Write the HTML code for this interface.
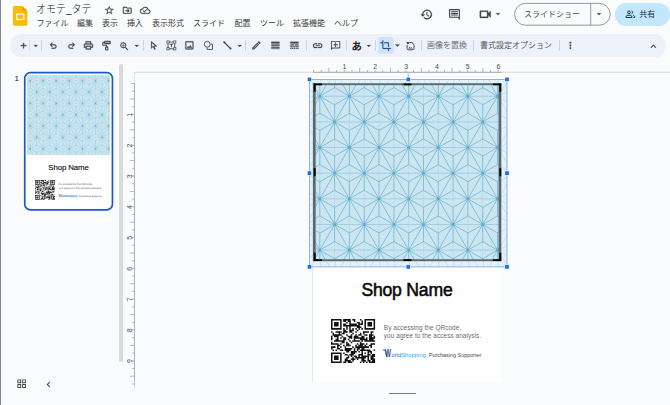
<!DOCTYPE html>
<html lang="ja"><head><meta charset="utf-8"><title>オモテ_タテ - Google スライド</title>
<style>
html,body{margin:0;padding:0}
body{width:670px;height:405px;overflow:hidden;background:#f9fbfd;position:relative;font-family:"Liberation Sans","Noto Sans CJK JP",sans-serif;color:#1f1f1f}
.a{position:absolute}
.t{position:absolute;white-space:nowrap;line-height:1}
.menu{position:absolute;top:18.400px;font-size:8px;line-height:11px;color:#3a3a3a;white-space:nowrap}
.sep{position:absolute;top:40px;width:1px;height:11px;background:#d0d4da}
svg{overflow:visible}
.ic{position:absolute;overflow:visible}
</style></head><body>
<div class="a" style="left:0;top:0;width:1.2px;height:405px;background:#868686"></div><svg class="ic" style="left:12.7px;top:6.3px" width="14.4" height="19.8" viewBox="0 0 14.4 19.8"><path d="M1.4 0h7.9l5.1 5.100v13.300a1.400 1.400 0 0 1-1.400 1.400H1.400A1.400 1.400 0 0 1 0 18.400V1.400A1.400 1.400 0 0 1 1.400 0z" fill="#fbbc04"/><path d="M9.3 0l5.100 5.100H10.400a1.100 1.100 0 0 1-1.100-1.100z" fill="#f29900"/><rect x="3.700" y="8.200" width="7.100" height="5.300" fill="none" stroke="#fff" stroke-width="1.200"/></svg><div class="t" id="title" style="left:36px;top:3.300px;font-size:10px;line-height:14px;color:#222;font-weight:300;transform:scaleY(1.08);transform-origin:0 50%">オモテ_タテ</div><svg class="ic" style="left:104.05px;top:4.75px" width="10.50" height="10.50" viewBox="0 0 24 24"><path d="M22 9.24l-7.19-.62L12 2 9.19 8.63 2 9.24l5.46 4.73L5.82 21 12 17.27 18.18 21l-1.63-7.03L22 9.24zM12 15.4l-3.76 2.27 1-4.28-3.32-2.88 4.38-.38L12 6.1l1.71 4.04 4.38.38-3.32 2.88 1 4.28L12 15.4z" fill="#444746" stroke="#444746" stroke-width="0.50"/></svg><svg class="ic" style="left:122.35px;top:4.95px" width="10.50" height="10.50" viewBox="0 0 24 24"><path d="M20 6h-8l-2-2H4c-1.1 0-2 .9-2 2v12c0 1.1.9 2 2 2h16c1.1 0 2-.9 2-2V8c0-1.1-.9-2-2-2zm0 12H4V6h5.17l2 2H20v10zm-7.84-2.41L13.58 17l4-4-4-4-1.41 1.41L13.75 12H8v2h5.75z" fill="#444746" stroke="#444746" stroke-width="0.50"/></svg><svg class="ic" style="left:140.25px;top:5.15px" width="10.50" height="10.50" viewBox="0 0 24 24"><path d="M19.35 10.04C18.67 6.59 15.64 4 12 4 9.11 4 6.6 5.64 5.35 8.04 2.34 8.36 0 10.91 0 14c0 3.31 2.69 6 6 6h13c2.76 0 5-2.24 5-5 0-2.64-2.05-4.78-4.65-4.96zM19 18H6c-2.21 0-4-1.79-4-4 0-2.05 1.53-3.76 3.56-3.97l1.07-.11.5-.95C8.08 7.14 9.94 6 12 6c2.62 0 4.88 1.86 5.39 4.43l.3 1.5 1.53.11c1.56.1 2.78 1.41 2.78 2.96 0 1.65-1.35 3-3 3zm-9-3.82l-2.09-2.09L6.5 13.5 10 17l6.01-6.01-1.41-1.41z" fill="#444746" stroke="#444746" stroke-width="0.50"/></svg><div class="menu" id="m0" style="left:36.5px">ファイル</div><div class="menu" id="m1" style="left:77.0px">編集</div><div class="menu" id="m2" style="left:102.0px">表示</div><div class="menu" id="m3" style="left:127.0px">挿入</div><div class="menu" id="m4" style="left:152.0px">表示形式</div><div class="menu" id="m5" style="left:193.0px">スライド</div><div class="menu" id="m6" style="left:234.5px">配置</div><div class="menu" id="m7" style="left:260.0px">ツール</div><div class="menu" id="m8" style="left:293.0px">拡張機能</div><div class="menu" id="m9" style="left:334.0px">ヘルプ</div><svg class="ic" style="left:419.80px;top:7.80px" width="13.00" height="13.00" viewBox="0 0 24 24"><path d="M13 3c-4.97 0-9 4.03-9 9H1l3.89 3.89.07.14L9 12H6c0-3.87 3.13-7 7-7s7 3.13 7 7-3.13 7-7 7c-1.93 0-3.68-.79-4.94-2.06l-1.42 1.42C8.27 19.99 10.51 21 13 21c4.97 0 9-4.03 9-9s-4.03-9-9-9zm-1 5v5l4.28 2.54.72-1.21-3.5-2.08V8H12z" fill="#444746" stroke="#444746" stroke-width="0.50"/></svg><svg class="ic" style="left:448.10px;top:8.30px" width="13.00" height="13.00" viewBox="0 0 24 24"><path d="M21.99 4c0-1.1-.89-2-1.99-2H4c-1.1 0-2 .9-2 2v12c0 1.1.9 2 2 2h14l4 4-.01-18zM20 4v13.17L18.83 16H4V4h16zM6 12h12v2H6zm0-3h12v2H6zm0-3h12v2H6z" fill="#444746" stroke="#444746" stroke-width="0.15"/></svg><svg class="ic" style="left:477.55px;top:7.35px" width="14.50" height="14.50" viewBox="0 0 24 24"><path d="M15 8v8H5V8h10m1-2H4c-.55 0-1 .45-1 1v10c0 .55.45 1 1 1h12c.55 0 1-.45 1-1v-3.5l4 4v-11l-4 4V7c0-.55-.45-1-1-1z" fill="#444746" stroke="#444746" stroke-width="0.50"/></svg><svg class="ic" style="left:493.30px;top:9.30px" width="10.00" height="10.00" viewBox="0 0 24 24"><path d="M7 10l5 5 5-5z" fill="#444746" stroke="#444746" stroke-width="0.50"/></svg><svg class="ic" style="left:0;top:0" width="670" height="30" viewBox="0 0 670 30"><rect x="514.600" y="3.400" width="95.600" height="21.800" rx="10.900" fill="none" stroke="#7f8285" stroke-width="0.800"/><path d="M590.700 3.400V25.200" stroke="#7f8285" stroke-width="0.800"/></svg><div class="t" id="ss" style="left:524px;top:8.700px;font-size:8px;line-height:11px;color:#4d5156">スライドショー</div><svg class="ic" style="left:594.30px;top:9.30px" width="10.00" height="10.00" viewBox="0 0 24 24"><path d="M7 10l5 5 5-5z" fill="#444746" stroke="#444746" stroke-width="0.50"/></svg><div class="a" style="left:615px;top:3px;width:54.500px;height:22.500px;background:#c2e7ff;border-radius:11.500px"></div><svg class="ic" style="left:624.50px;top:8.70px" width="10.60" height="10.60" viewBox="0 0 24 24"><g fill="none" stroke="#0e2a44" stroke-width="2.200"><circle cx="9" cy="7.600" r="3.100"/><path d="M2.200 19.200v-1.600c0-2.400 4.400-3.800 6.800-3.800s6.800 1.400 6.800 3.800v1.600z" stroke-linejoin="round"/><path d="M15 4.600a3.100 3.100 0 0 1 0 6"/><path d="M18 14.200c2.100.600 4 1.700 4 3.400v1.600h-3"/></g></svg><div class="t" id="share" style="left:639.300px;top:8.700px;font-size:8px;line-height:11px;color:#1a2f44;font-weight:400">共有</div><div class="a" style="left:9.500px;top:34px;width:656px;height:23px;background:#edf2fa;border-radius:11.500px"></div><svg class="ic" style="left:18.70px;top:40.90px" width="9.20" height="9.20" viewBox="0 0 24 24"><path d="M19 13h-6v6h-2v-6H5v-2h6V5h2v6h6v2z" fill="#444746" stroke="#444746" stroke-width="1.20"/></svg><div class="sep" style="left:29.300px;background:#cfe3f3"></div><svg class="ic" style="left:31.25px;top:40.75px" width="9.50" height="9.50" viewBox="0 0 24 24"><path d="M7 10l5 5 5-5z" fill="#444746" stroke="#444746" stroke-width="0.50"/></svg><div class="sep" style="left:40.900px"></div><svg class="ic" style="left:47.90px;top:40.40px" width="10.80" height="10.80" viewBox="0 0 24 24"><path d="M7.8 9.5H14a5 5 0 0 1 0 10H8v-2h6a3 3 0 0 0 0-6H7.8l2.6 2.6L9 15.5 4 10.5l5-5 1.4 1.4z" fill="#444746" stroke="#444746" stroke-width="0.50"/></svg><svg class="ic" style="left:65.80px;top:40.40px" width="10.80" height="10.80" viewBox="0 0 24 24"><path d="M7.8 9.5H14a5 5 0 0 1 0 10H8v-2h6a3 3 0 0 0 0-6H7.8l2.6 2.6L9 15.5 4 10.5l5-5 1.4 1.4z" fill="#444746" stroke="#444746" stroke-width="0.50" transform="translate(24 0) scale(-1 1)"/></svg><svg class="ic" style="left:83.30px;top:40.10px" width="10.80" height="10.80" viewBox="0 0 24 24"><path d="M19 8h-1V3H6v5H5c-1.66 0-3 1.34-3 3v6h4v4h12v-4h4v-6c0-1.66-1.34-3-3-3zM8 5h8v3H8V5zm8 12v2H8v-4h8v2zm2-2v-2H6v2H4v-4c0-.55.45-1 1-1h14c.55 0 1 .45 1 1v4h-2z" fill="#444746" stroke="#444746" stroke-width="0.50"/></svg><svg class="ic" style="left:101.00px;top:40.30px" width="10.80" height="10.80" viewBox="0 0 24 24"><g fill="none" stroke="#444746" stroke-width="2.400" stroke-linejoin="round"><rect x="8" y="2.600" width="12.500" height="5.400" rx="1.600" fill="#9fa2a3"/><path d="M8 5.300H5.200a1.200 1.200 0 0 0-1.200 1.200v4a1.200 1.200 0 0 0 1.200 1.200h6.300a1.200 1.200 0 0 1 1.200 1.200v2.600"/><rect x="10.200" y="15.800" width="5" height="6.600" rx="1.200"/></g></svg><svg class="ic" style="left:119.40px;top:40.60px" width="10.80" height="10.80" viewBox="0 0 24 24"><path d="M15.5 14h-.79l-.28-.27C15.41 12.59 16 11.11 16 9.5 16 5.91 13.09 3 9.5 3S3 5.91 3 9.5 5.91 16 9.5 16c1.61 0 3.09-.59 4.23-1.57l.27.28v.79l5 4.99L20.49 19l-4.99-5zm-6 0C7.01 14 5 11.99 5 9.5S7.01 5 9.5 5 14 7.01 14 9.5 11.99 14 9.5 14zm.5-7H9v2H7v1h2v2h1v-2h2V9h-2z" fill="#444746" stroke="#444746" stroke-width="0.30"/></svg><svg class="ic" style="left:131.55px;top:40.75px" width="9.50" height="9.50" viewBox="0 0 24 24"><path d="M7 10l5 5 5-5z" fill="#444746" stroke="#444746" stroke-width="0.50"/></svg><div class="sep" style="left:142.500px"></div><svg class="ic" style="left:147.60px;top:40.10px" width="10.80" height="10.80" viewBox="0 0 24 24"><path d="M7 2.5v17l4.6-4.4 2.9 6.6 2.4-1-2.9-6.5 6.2-.4L7 2.5zm1.8 4.2l6.900 6.100-3.600.300-.500 1.100.600 1.400 1.700 3.800-.100.000-2.600-5.800-2.400 2.300V6.700z" fill="#444746" stroke="#444746" stroke-width="0.50"/></svg><svg class="ic" style="left:165.60px;top:40.10px" width="10.80" height="10.80" viewBox="0 0 24 24"><g fill="none" stroke="#444746" stroke-width="2"><rect x="4.500" y="4.500" width="15" height="15"/></g><g fill="#edf2fa" stroke="#444746" stroke-width="1.600"><rect x="2" y="2" width="5" height="5"/><rect x="17" y="2" width="5" height="5"/><rect x="2" y="17" width="5" height="5"/><rect x="17" y="17" width="5" height="5"/></g><path d="M8.500 8.500h7v2h-2.500v5.500h-2V10.500H8.500z" fill="#444746"/></svg><svg class="ic" style="left:184.10px;top:40.10px" width="10.80" height="10.80" viewBox="0 0 24 24"><path d="M19 5v14H5V5h14m0-2H5c-1.1 0-2 .9-2 2v14c0 1.1.9 2 2 2h14c1.1 0 2-.9 2-2V5c0-1.1-.9-2-2-2zm-4.86 8.86l-3 3.87L9 13.14 6 17h12l-3.86-5.14z" fill="#444746" stroke="#444746" stroke-width="0.50"/></svg><svg class="ic" style="left:202.60px;top:40.10px" width="10.80" height="10.80" viewBox="0 0 24 24"><g fill="none" stroke="#444746" stroke-width="2"><circle cx="9.500" cy="9.500" r="6.500"/><path d="M16.800 9.200H21v11.800H9.200v-4.200"/></g></svg><svg class="ic" style="left:221.60px;top:40.10px" width="10.80" height="10.80" viewBox="0 0 24 24"><path d="M5.500 5.500L18.500 18.500" stroke="#444746" stroke-width="2.800"/><circle cx="5" cy="5" r="2.400" fill="#444746"/><circle cx="19" cy="19" r="2.200" fill="#444746"/></svg><svg class="ic" style="left:234.55px;top:40.75px" width="9.50" height="9.50" viewBox="0 0 24 24"><path d="M7 10l5 5 5-5z" fill="#444746" stroke="#444746" stroke-width="0.50"/></svg><div class="sep" style="left:244.500px"></div><svg class="ic" style="left:250.60px;top:40.10px" width="10.80" height="10.80" viewBox="0 0 24 24"><path d="M3 17.25V21h3.750L17.810 9.940l-3.750-3.750L3 17.250zM5.920 19H5v-.920l9.060-9.060.920.920L5.920 19zM20.710 5.630l-2.340-2.340a1 1 0 0 0-1.410 0l-1.830 1.830 3.750 3.750 1.830-1.830a1 1 0 0 0 0-1.410z" fill="#444746" stroke="#444746" stroke-width="0.50"/></svg><svg class="ic" style="left:270.10px;top:40.10px" width="10.80" height="10.80" viewBox="0 0 24 24"><path d="M3 17h18v-2H3v2zm0 3h18v-1H3v1zm0-7h18v-3H3v3zm0-9v4h18V4H3z" fill="#444746" stroke="#444746" stroke-width="0.50"/></svg><svg class="ic" style="left:288.60px;top:40.10px" width="10.80" height="10.80" viewBox="0 0 24 24"><path d="M3 16h5v-2H3v2zm6.500 0h5v-2h-5v2zm6.500 0h5v-2h-5v2zM3 20h2v-2H3v2zm4 0h2v-2H7v2zm4 0h2v-2h-2v2zm4 0h2v-2h-2v2zm4 0h2v-2h-2v2zM3 12h8v-2H3v2zm10 0h8v-2h-8v2zM3 4v4h18V4H3z" fill="#444746" stroke="#444746" stroke-width="0.50"/></svg><div class="sep" style="left:306px"></div><svg class="ic" style="left:311.85px;top:39.85px" width="11.30" height="11.30" viewBox="0 0 24 24"><path d="M3.9 12c0-1.71 1.39-3.1 3.1-3.1h4V7H7c-2.76 0-5 2.24-5 5s2.24 5 5 5h4v-1.9H7c-1.71 0-3.1-1.39-3.1-3.1zM8 13h8v-2H8v2zm9-6h-4v1.9h4c1.71 0 3.1 1.39 3.1 3.1s-1.39 3.1-3.1 3.1h-4V17h4c2.76 0 5-2.24 5-5s-2.24-5-5-5z" fill="#444746" stroke="#444746" stroke-width="0.50"/></svg><svg class="ic" style="left:329.70px;top:40.10px" width="11.20" height="11.20" viewBox="0 0 24 24"><path d="M22 4c0-1.1-.9-2-2-2H4c-1.1 0-2 .9-2 2v12c0 1.1.9 2 2 2h14l4 4V4zm-2 13.17L18.83 16H4V4h16v13.17zM13 5h-2v4H7v2h4v4h2v-4h4V9h-4z" fill="#444746" stroke="#444746" stroke-width="0.00" transform="translate(24 0) scale(-1 1)"/></svg><div class="sep" style="left:346px"></div><div class="t" id="aa" style="left:351.500px;top:39.500px;font-size:10.500px;line-height:12px;color:#1f1f1f;font-weight:700">あ</div><svg class="ic" style="left:363.75px;top:40.75px" width="9.50" height="9.50" viewBox="0 0 24 24"><path d="M7 10l5 5 5-5z" fill="#444746" stroke="#444746" stroke-width="0.50"/></svg><div class="sep" style="left:374.500px"></div><div class="a" style="left:377.500px;top:37px;width:16.500px;height:17px;background:#d3e3fd;border-radius:2.500px"></div><svg class="ic" style="left:380.15px;top:40.05px" width="11.30" height="11.30" viewBox="0 0 24 24"><path d="M17 15h2V7c0-1.1-.9-2-2-2H9v2h8v8zM7 17V1H5v4H1v2h4v10c0 1.1.9 2 2 2h10v4h2v-4h4v-2H7z" fill="#2d5597" stroke="#2d5597" stroke-width="0.50"/></svg><svg class="ic" style="left:392.00px;top:39.90px" width="10.80" height="10.80" viewBox="0 0 24 24"><path d="M7 10l5 5 5-5z" fill="#444746" stroke="#444746" stroke-width="0.50"/></svg><svg class="ic" style="left:404.60px;top:39.70px" width="11.20" height="11.20" viewBox="0 0 24 24"><path d="M4.500 11v7.500c0 1.400 1.100 2.500 2.500 2.500h10c1.400 0 2.500-1.100 2.500-2.500V11" fill="none" stroke="#444746" stroke-width="2.100"/><path d="M6.200 8.500A7.200 7.200 0 0 1 19.300 10.500" fill="none" stroke="#444746" stroke-width="2.100"/><path d="M3.200 3.500l6.300 1.200-5 4.800z" fill="#444746"/><path d="M7 18.500l3.200-4 2.300 2.800 1.700-2 2.800 3.200z" fill="#444746"/></svg><div class="sep" style="left:421px"></div><div class="t" id="rep" style="left:427px;top:40px;font-size:8px;line-height:11px;color:#6b7075">画像を置換</div><div class="sep" style="left:472.500px"></div><div class="t" id="fmt" style="left:480px;top:40px;font-size:8px;line-height:11px;color:#50555a">書式設定オプション</div><div class="sep" style="left:558.500px"></div><svg class="ic" style="left:565.10px;top:40.10px" width="10.80" height="10.80" viewBox="0 0 24 24"><path d="M12 8c1.1 0 2-.9 2-2s-.9-2-2-2-2 .9-2 2 .9 2 2 2zm0 2c-1.1 0-2 .9-2 2s.9 2 2 2 2-.9 2-2-.9-2-2-2zm0 6c-1.1 0-2 .9-2 2s.9 2 2 2 2-.9 2-2-.9-2-2-2z" fill="#444746" stroke="#444746" stroke-width="0.50"/></svg><svg class="ic" style="left:648.10px;top:40.60px" width="10.80" height="10.80" viewBox="0 0 24 24"><path d="M12 8l-6 6 1.41 1.41L12 10.830l4.59 4.58L18 14z" fill="#444746" stroke="#444746" stroke-width="0.50"/></svg><div class="t" id="n1" style="left:14.500px;top:74.200px;font-size:8px;line-height:10px;color:#222;font-weight:400">1</div><div class="a" style="left:118.700px;top:64px;width:4.200px;height:297.500px;background:#d9dbdf;border-radius:2.100px"></div><svg class="ic" style="left:0;top:0" width="140" height="220" viewBox="0 0 140 220"><rect x="24.750" y="72.650" width="87.700" height="137.200" rx="5.700" fill="#fff" stroke="#1c58cb" stroke-width="1.700"/></svg><svg class="ic" style="left:26.90px;top:75.30px;overflow:hidden;border-radius:2.500px 2.500px 0 0" width="82.90" height="79.50" viewBox="313.200 83.200 187.500 180"><rect x="310" y="80" width="198" height="190" fill="#cce6f1"/><path d="M260.9 44.9L290.5 44.9M275.7 36.3L275.7 53.4M290.5 44.9L320.1 44.9M305.3 36.3L305.3 53.4M320.1 44.9L349.7 44.9M334.9 36.3L334.9 53.4M349.7 44.9L379.3 44.9M364.5 36.3L364.5 53.4M379.3 44.9L409.0 44.9M394.2 36.3L394.2 53.4M409.0 44.9L438.6 44.9M423.8 36.3L423.8 53.4M438.6 44.9L468.2 44.9M453.4 36.3L453.4 53.4M468.2 44.9L497.8 44.9M483.0 36.3L483.0 53.4M497.8 44.9L527.4 44.9M512.6 36.3L512.6 53.4M527.4 44.9L557.1 44.9M542.2 36.3L542.2 53.4M557.1 44.9L586.7 44.9M571.9 36.3L571.9 53.4M275.7 70.5L305.3 70.5M290.5 62.0L290.5 79.1M305.3 70.5L334.9 70.5M320.1 62.0L320.1 79.1M334.9 70.5L364.5 70.5M349.7 62.0L349.7 79.1M364.5 70.5L394.2 70.5M379.3 62.0L379.3 79.1M394.2 70.5L423.8 70.5M409.0 62.0L409.0 79.1M423.8 70.5L453.4 70.5M438.6 62.0L438.6 79.1M453.4 70.5L483.0 70.5M468.2 62.0L468.2 79.1M483.0 70.5L512.6 70.5M497.8 62.0L497.8 79.1M512.6 70.5L542.2 70.5M527.4 62.0L527.4 79.1M542.2 70.5L571.9 70.5M557.1 62.0L557.1 79.1M571.9 70.5L601.5 70.5M586.7 62.0L586.7 79.1M260.9 96.2L290.5 96.2M275.7 87.6L275.7 104.8M290.5 96.2L320.1 96.2M305.3 87.6L305.3 104.8M320.1 96.2L349.7 96.2M334.9 87.6L334.9 104.8M349.7 96.2L379.3 96.2M364.5 87.6L364.5 104.8M379.3 96.2L409.0 96.2M394.2 87.6L394.2 104.8M409.0 96.2L438.6 96.2M423.8 87.6L423.8 104.8M438.6 96.2L468.2 96.2M453.4 87.6L453.4 104.8M468.2 96.2L497.8 96.2M483.0 87.6L483.0 104.8M497.8 96.2L527.4 96.2M512.6 87.6L512.6 104.8M527.4 96.2L557.1 96.2M542.2 87.6L542.2 104.8M557.1 96.2L586.7 96.2M571.9 87.6L571.9 104.8M275.7 121.9L305.3 121.9M290.5 113.3L290.5 130.4M305.3 121.9L334.9 121.9M320.1 113.3L320.1 130.4M334.9 121.9L364.5 121.9M349.7 113.3L349.7 130.4M364.5 121.9L394.2 121.9M379.3 113.3L379.3 130.4M394.2 121.9L423.8 121.9M409.0 113.3L409.0 130.4M423.8 121.9L453.4 121.9M438.6 113.3L438.6 130.4M453.4 121.9L483.0 121.9M468.2 113.3L468.2 130.4M483.0 121.9L512.6 121.9M497.8 113.3L497.8 130.4M512.6 121.9L542.2 121.9M527.4 113.3L527.4 130.4M542.2 121.9L571.9 121.9M557.1 113.3L557.1 130.4M571.9 121.9L601.5 121.9M586.7 113.3L586.7 130.4M260.9 147.5L290.5 147.5M275.7 139.0L275.7 156.1M290.5 147.5L320.1 147.5M305.3 139.0L305.3 156.1M320.1 147.5L349.7 147.5M334.9 139.0L334.9 156.1M349.7 147.5L379.3 147.5M364.5 139.0L364.5 156.1M379.3 147.5L409.0 147.5M394.2 139.0L394.2 156.1M409.0 147.5L438.6 147.5M423.8 139.0L423.8 156.1M438.6 147.5L468.2 147.5M453.4 139.0L453.4 156.1M468.2 147.5L497.8 147.5M483.0 139.0L483.0 156.1M497.8 147.5L527.4 147.5M512.6 139.0L512.6 156.1M527.4 147.5L557.1 147.5M542.2 139.0L542.2 156.1M557.1 147.5L586.7 147.5M571.9 139.0L571.9 156.1M275.7 173.2L305.3 173.2M290.5 164.6L290.5 181.7M305.3 173.2L334.9 173.2M320.1 164.6L320.1 181.7M334.9 173.2L364.5 173.2M349.7 164.6L349.7 181.7M364.5 173.2L394.2 173.2M379.3 164.6L379.3 181.7M394.2 173.2L423.8 173.2M409.0 164.6L409.0 181.7M423.8 173.2L453.4 173.2M438.6 164.6L438.6 181.7M453.4 173.2L483.0 173.2M468.2 164.6L468.2 181.7M483.0 173.2L512.6 173.2M497.8 164.6L497.8 181.7M512.6 173.2L542.2 173.2M527.4 164.6L527.4 181.7M542.2 173.2L571.9 173.2M557.1 164.6L557.1 181.7M571.9 173.2L601.5 173.2M586.7 164.6L586.7 181.7M260.9 198.8L290.5 198.8M275.7 190.3L275.7 207.4M290.5 198.8L320.1 198.8M305.3 190.3L305.3 207.4M320.1 198.8L349.7 198.8M334.9 190.3L334.9 207.4M349.7 198.8L379.3 198.8M364.5 190.3L364.5 207.4M379.3 198.8L409.0 198.8M394.2 190.3L394.2 207.4M409.0 198.8L438.6 198.8M423.8 190.3L423.8 207.4M438.6 198.8L468.2 198.8M453.4 190.3L453.4 207.4M468.2 198.8L497.8 198.8M483.0 190.3L483.0 207.4M497.8 198.8L527.4 198.8M512.6 190.3L512.6 207.4M527.4 198.8L557.1 198.8M542.2 190.3L542.2 207.4M557.1 198.8L586.7 198.8M571.9 190.3L571.9 207.4M275.7 224.5L305.3 224.5M290.5 215.9L290.5 233.0M305.3 224.5L334.9 224.5M320.1 215.9L320.1 233.0M334.9 224.5L364.5 224.5M349.7 215.9L349.7 233.0M364.5 224.5L394.2 224.5M379.3 215.9L379.3 233.0M394.2 224.5L423.8 224.5M409.0 215.9L409.0 233.0M423.8 224.5L453.4 224.5M438.6 215.9L438.6 233.0M453.4 224.5L483.0 224.5M468.2 215.9L468.2 233.0M483.0 224.5L512.6 224.5M497.8 215.9L497.8 233.0M512.6 224.5L542.2 224.5M527.4 215.9L527.4 233.0M542.2 224.5L571.9 224.5M557.1 215.9L557.1 233.0M571.9 224.5L601.5 224.5M586.7 215.9L586.7 233.0M260.9 250.1L290.5 250.1M275.7 241.6L275.7 258.7M290.5 250.1L320.1 250.1M305.3 241.6L305.3 258.7M320.1 250.1L349.7 250.1M334.9 241.6L334.9 258.7M349.7 250.1L379.3 250.1M364.5 241.6L364.5 258.7M379.3 250.1L409.0 250.1M394.2 241.6L394.2 258.7M409.0 250.1L438.6 250.1M423.8 241.6L423.8 258.7M438.6 250.1L468.2 250.1M453.4 241.6L453.4 258.7M468.2 250.1L497.8 250.1M483.0 241.6L483.0 258.7M497.8 250.1L527.4 250.1M512.6 241.6L512.6 258.7M527.4 250.1L557.1 250.1M542.2 241.6L542.2 258.7M557.1 250.1L586.7 250.1M571.9 241.6L571.9 258.7M275.7 275.8L305.3 275.8M290.5 267.2L290.5 284.3M305.3 275.8L334.9 275.8M320.1 267.2L320.1 284.3M334.9 275.8L364.5 275.8M349.7 267.2L349.7 284.3M364.5 275.8L394.2 275.8M379.3 267.2L379.3 284.3M394.2 275.8L423.8 275.8M409.0 267.2L409.0 284.3M423.8 275.8L453.4 275.8M438.6 267.2L438.6 284.3M453.4 275.8L483.0 275.8M468.2 267.2L468.2 284.3M483.0 275.8L512.6 275.8M497.8 267.2L497.8 284.3M512.6 275.8L542.2 275.8M527.4 267.2L527.4 284.3M542.2 275.8L571.9 275.8M557.1 267.2L557.1 284.3M571.9 275.8L601.5 275.8M586.7 267.2L586.7 284.3M260.9 301.4L290.5 301.4M275.7 292.9L275.7 310.0M290.5 301.4L320.1 301.4M305.3 292.9L305.3 310.0M320.1 301.4L349.7 301.4M334.9 292.9L334.9 310.0M349.7 301.4L379.3 301.4M364.5 292.9L364.5 310.0M379.3 301.4L409.0 301.4M394.2 292.9L394.2 310.0M409.0 301.4L438.6 301.4M423.8 292.9L423.8 310.0M438.6 301.4L468.2 301.4M453.4 292.9L453.4 310.0M468.2 301.4L497.8 301.4M483.0 292.9L483.0 310.0M497.8 301.4L527.4 301.4M512.6 292.9L512.6 310.0M527.4 301.4L557.1 301.4M542.2 292.9L542.2 310.0M557.1 301.4L586.7 301.4M571.9 292.9L571.9 310.0" stroke="#abd3e5" stroke-width="0.800" fill="none"/><path d="M260.9 44.9L275.7 70.5M260.9 44.9L246.1 70.5M260.9 44.9L275.7 53.4M260.9 44.9L260.9 62.0M260.9 44.9L246.1 53.4M260.9 44.9L246.1 36.3M260.9 44.9L260.9 27.8M260.9 44.9L275.7 36.3M290.5 44.9L305.3 70.5M290.5 44.9L275.7 70.5M290.5 44.9L305.3 53.4M290.5 44.9L290.5 62.0M290.5 44.9L275.7 53.4M290.5 44.9L275.7 36.3M290.5 44.9L290.5 27.8M290.5 44.9L305.3 36.3M320.1 44.9L334.9 70.5M320.1 44.9L305.3 70.5M320.1 44.9L334.9 53.4M320.1 44.9L320.1 62.0M320.1 44.9L305.3 53.4M320.1 44.9L305.3 36.3M320.1 44.9L320.1 27.8M320.1 44.9L334.9 36.3M349.7 44.9L364.5 70.5M349.7 44.9L334.9 70.5M349.7 44.9L364.5 53.4M349.7 44.9L349.7 62.0M349.7 44.9L334.9 53.4M349.7 44.9L334.9 36.3M349.7 44.9L349.7 27.8M349.7 44.9L364.5 36.3M379.3 44.9L394.2 70.5M379.3 44.9L364.5 70.5M379.3 44.9L394.2 53.4M379.3 44.9L379.3 62.0M379.3 44.9L364.5 53.4M379.3 44.9L364.5 36.3M379.3 44.9L379.3 27.8M379.3 44.9L394.2 36.3M409.0 44.9L423.8 70.5M409.0 44.9L394.2 70.5M409.0 44.9L423.8 53.4M409.0 44.9L409.0 62.0M409.0 44.9L394.2 53.4M409.0 44.9L394.2 36.3M409.0 44.9L409.0 27.8M409.0 44.9L423.8 36.3M438.6 44.9L453.4 70.5M438.6 44.9L423.8 70.5M438.6 44.9L453.4 53.4M438.6 44.9L438.6 62.0M438.6 44.9L423.8 53.4M438.6 44.9L423.8 36.3M438.6 44.9L438.6 27.8M438.6 44.9L453.4 36.3M468.2 44.9L483.0 70.5M468.2 44.9L453.4 70.5M468.2 44.9L483.0 53.4M468.2 44.9L468.2 62.0M468.2 44.9L453.4 53.4M468.2 44.9L453.4 36.3M468.2 44.9L468.2 27.8M468.2 44.9L483.0 36.3M497.8 44.9L512.6 70.5M497.8 44.9L483.0 70.5M497.8 44.9L512.6 53.4M497.8 44.9L497.8 62.0M497.8 44.9L483.0 53.4M497.8 44.9L483.0 36.3M497.8 44.9L497.8 27.8M497.8 44.9L512.6 36.3M527.4 44.9L542.2 70.5M527.4 44.9L512.6 70.5M527.4 44.9L542.2 53.4M527.4 44.9L527.4 62.0M527.4 44.9L512.6 53.4M527.4 44.9L512.6 36.3M527.4 44.9L527.4 27.8M527.4 44.9L542.2 36.3M557.1 44.9L571.9 70.5M557.1 44.9L542.3 70.5M557.1 44.9L571.9 53.4M557.1 44.9L557.1 62.0M557.1 44.9L542.3 53.4M557.1 44.9L542.3 36.3M557.1 44.9L557.1 27.8M557.1 44.9L571.9 36.3M275.7 70.5L290.5 96.2M275.7 70.5L260.9 96.2M275.7 70.5L290.5 79.1M275.7 70.5L275.7 87.6M275.7 70.5L260.9 79.1M275.7 70.5L260.9 62.0M275.7 70.5L275.7 53.4M275.7 70.5L290.5 62.0M305.3 70.5L320.1 96.2M305.3 70.5L290.5 96.2M305.3 70.5L320.1 79.1M305.3 70.5L305.3 87.6M305.3 70.5L290.5 79.1M305.3 70.5L290.5 62.0M305.3 70.5L305.3 53.4M305.3 70.5L320.1 62.0M334.9 70.5L349.7 96.2M334.9 70.5L320.1 96.2M334.9 70.5L349.7 79.1M334.9 70.5L334.9 87.6M334.9 70.5L320.1 79.1M334.9 70.5L320.1 62.0M334.9 70.5L334.9 53.4M334.9 70.5L349.7 62.0M364.5 70.5L379.3 96.2M364.5 70.5L349.7 96.2M364.5 70.5L379.3 79.1M364.5 70.5L364.5 87.6M364.5 70.5L349.7 79.1M364.5 70.5L349.7 62.0M364.5 70.5L364.5 53.4M364.5 70.5L379.3 62.0M394.2 70.5L409.0 96.2M394.2 70.5L379.3 96.2M394.2 70.5L409.0 79.1M394.2 70.5L394.2 87.6M394.2 70.5L379.3 79.1M394.2 70.5L379.3 62.0M394.2 70.5L394.2 53.4M394.2 70.5L409.0 62.0M423.8 70.5L438.6 96.2M423.8 70.5L409.0 96.2M423.8 70.5L438.6 79.1M423.8 70.5L423.8 87.6M423.8 70.5L409.0 79.1M423.8 70.5L409.0 62.0M423.8 70.5L423.8 53.4M423.8 70.5L438.6 62.0M453.4 70.5L468.2 96.2M453.4 70.5L438.6 96.2M453.4 70.5L468.2 79.1M453.4 70.5L453.4 87.6M453.4 70.5L438.6 79.1M453.4 70.5L438.6 62.0M453.4 70.5L453.4 53.4M453.4 70.5L468.2 62.0M483.0 70.5L497.8 96.2M483.0 70.5L468.2 96.2M483.0 70.5L497.8 79.1M483.0 70.5L483.0 87.6M483.0 70.5L468.2 79.1M483.0 70.5L468.2 62.0M483.0 70.5L483.0 53.4M483.0 70.5L497.8 62.0M512.6 70.5L527.4 96.2M512.6 70.5L497.8 96.2M512.6 70.5L527.4 79.1M512.6 70.5L512.6 87.6M512.6 70.5L497.8 79.1M512.6 70.5L497.8 62.0M512.6 70.5L512.6 53.4M512.6 70.5L527.4 62.0M542.2 70.5L557.1 96.2M542.2 70.5L527.4 96.2M542.2 70.5L557.1 79.1M542.2 70.5L542.2 87.6M542.2 70.5L527.4 79.1M542.2 70.5L527.4 62.0M542.2 70.5L542.2 53.4M542.2 70.5L557.1 62.0M571.9 70.5L586.7 96.2M571.9 70.5L557.1 96.2M571.9 70.5L586.7 79.1M571.9 70.5L571.9 87.6M571.9 70.5L557.1 79.1M571.9 70.5L557.1 62.0M571.9 70.5L571.9 53.4M571.9 70.5L586.7 62.0M260.9 96.2L275.7 121.9M260.9 96.2L246.1 121.9M260.9 96.2L275.7 104.8M260.9 96.2L260.9 113.3M260.9 96.2L246.1 104.8M260.9 96.2L246.1 87.6M260.9 96.2L260.9 79.1M260.9 96.2L275.7 87.6M290.5 96.2L305.3 121.9M290.5 96.2L275.7 121.9M290.5 96.2L305.3 104.8M290.5 96.2L290.5 113.3M290.5 96.2L275.7 104.8M290.5 96.2L275.7 87.6M290.5 96.2L290.5 79.1M290.5 96.2L305.3 87.6M320.1 96.2L334.9 121.9M320.1 96.2L305.3 121.9M320.1 96.2L334.9 104.8M320.1 96.2L320.1 113.3M320.1 96.2L305.3 104.8M320.1 96.2L305.3 87.6M320.1 96.2L320.1 79.1M320.1 96.2L334.9 87.6M349.7 96.2L364.5 121.9M349.7 96.2L334.9 121.9M349.7 96.2L364.5 104.8M349.7 96.2L349.7 113.3M349.7 96.2L334.9 104.8M349.7 96.2L334.9 87.6M349.7 96.2L349.7 79.1M349.7 96.2L364.5 87.6M379.3 96.2L394.2 121.9M379.3 96.2L364.5 121.9M379.3 96.2L394.2 104.8M379.3 96.2L379.3 113.3M379.3 96.2L364.5 104.8M379.3 96.2L364.5 87.6M379.3 96.2L379.3 79.1M379.3 96.2L394.2 87.6M409.0 96.2L423.8 121.9M409.0 96.2L394.2 121.9M409.0 96.2L423.8 104.8M409.0 96.2L409.0 113.3M409.0 96.2L394.2 104.8M409.0 96.2L394.2 87.6M409.0 96.2L409.0 79.1M409.0 96.2L423.8 87.6M438.6 96.2L453.4 121.9M438.6 96.2L423.8 121.9M438.6 96.2L453.4 104.8M438.6 96.2L438.6 113.3M438.6 96.2L423.8 104.8M438.6 96.2L423.8 87.6M438.6 96.2L438.6 79.1M438.6 96.2L453.4 87.6M468.2 96.2L483.0 121.9M468.2 96.2L453.4 121.9M468.2 96.2L483.0 104.8M468.2 96.2L468.2 113.3M468.2 96.2L453.4 104.8M468.2 96.2L453.4 87.6M468.2 96.2L468.2 79.1M468.2 96.2L483.0 87.6M497.8 96.2L512.6 121.9M497.8 96.2L483.0 121.9M497.8 96.2L512.6 104.8M497.8 96.2L497.8 113.3M497.8 96.2L483.0 104.8M497.8 96.2L483.0 87.6M497.8 96.2L497.8 79.1M497.8 96.2L512.6 87.6M527.4 96.2L542.2 121.9M527.4 96.2L512.6 121.9M527.4 96.2L542.2 104.8M527.4 96.2L527.4 113.3M527.4 96.2L512.6 104.8M527.4 96.2L512.6 87.6M527.4 96.2L527.4 79.1M527.4 96.2L542.2 87.6M557.1 96.2L571.9 121.9M557.1 96.2L542.3 121.9M557.1 96.2L571.9 104.8M557.1 96.2L557.1 113.3M557.1 96.2L542.3 104.8M557.1 96.2L542.3 87.6M557.1 96.2L557.1 79.1M557.1 96.2L571.9 87.6M275.7 121.9L290.5 147.5M275.7 121.9L260.9 147.5M275.7 121.9L290.5 130.4M275.7 121.9L275.7 139.0M275.7 121.9L260.9 130.4M275.7 121.9L260.9 113.3M275.7 121.9L275.7 104.8M275.7 121.9L290.5 113.3M305.3 121.9L320.1 147.5M305.3 121.9L290.5 147.5M305.3 121.9L320.1 130.4M305.3 121.9L305.3 139.0M305.3 121.9L290.5 130.4M305.3 121.9L290.5 113.3M305.3 121.9L305.3 104.8M305.3 121.9L320.1 113.3M334.9 121.9L349.7 147.5M334.9 121.9L320.1 147.5M334.9 121.9L349.7 130.4M334.9 121.9L334.9 139.0M334.9 121.9L320.1 130.4M334.9 121.9L320.1 113.3M334.9 121.9L334.9 104.8M334.9 121.9L349.7 113.3M364.5 121.9L379.3 147.5M364.5 121.9L349.7 147.5M364.5 121.9L379.3 130.4M364.5 121.9L364.5 139.0M364.5 121.9L349.7 130.4M364.5 121.9L349.7 113.3M364.5 121.9L364.5 104.8M364.5 121.9L379.3 113.3M394.2 121.9L409.0 147.5M394.2 121.9L379.3 147.5M394.2 121.9L409.0 130.4M394.2 121.9L394.2 139.0M394.2 121.9L379.3 130.4M394.2 121.9L379.3 113.3M394.2 121.9L394.2 104.8M394.2 121.9L409.0 113.3M423.8 121.9L438.6 147.5M423.8 121.9L409.0 147.5M423.8 121.9L438.6 130.4M423.8 121.9L423.8 139.0M423.8 121.9L409.0 130.4M423.8 121.9L409.0 113.3M423.8 121.9L423.8 104.8M423.8 121.9L438.6 113.3M453.4 121.9L468.2 147.5M453.4 121.9L438.6 147.5M453.4 121.9L468.2 130.4M453.4 121.9L453.4 139.0M453.4 121.9L438.6 130.4M453.4 121.9L438.6 113.3M453.4 121.9L453.4 104.8M453.4 121.9L468.2 113.3M483.0 121.9L497.8 147.5M483.0 121.9L468.2 147.5M483.0 121.9L497.8 130.4M483.0 121.9L483.0 139.0M483.0 121.9L468.2 130.4M483.0 121.9L468.2 113.3M483.0 121.9L483.0 104.8M483.0 121.9L497.8 113.3M512.6 121.9L527.4 147.5M512.6 121.9L497.8 147.5M512.6 121.9L527.4 130.4M512.6 121.9L512.6 139.0M512.6 121.9L497.8 130.4M512.6 121.9L497.8 113.3M512.6 121.9L512.6 104.8M512.6 121.9L527.4 113.3M542.2 121.9L557.1 147.5M542.2 121.9L527.4 147.5M542.2 121.9L557.1 130.4M542.2 121.9L542.2 139.0M542.2 121.9L527.4 130.4M542.2 121.9L527.4 113.3M542.2 121.9L542.2 104.8M542.2 121.9L557.1 113.3M571.9 121.9L586.7 147.5M571.9 121.9L557.1 147.5M571.9 121.9L586.7 130.4M571.9 121.9L571.9 139.0M571.9 121.9L557.1 130.4M571.9 121.9L557.1 113.3M571.9 121.9L571.9 104.8M571.9 121.9L586.7 113.3M260.9 147.5L275.7 173.2M260.9 147.5L246.1 173.2M260.9 147.5L275.7 156.1M260.9 147.5L260.9 164.6M260.9 147.5L246.1 156.1M260.9 147.5L246.1 139.0M260.9 147.5L260.9 130.4M260.9 147.5L275.7 139.0M290.5 147.5L305.3 173.2M290.5 147.5L275.7 173.2M290.5 147.5L305.3 156.1M290.5 147.5L290.5 164.6M290.5 147.5L275.7 156.1M290.5 147.5L275.7 139.0M290.5 147.5L290.5 130.4M290.5 147.5L305.3 139.0M320.1 147.5L334.9 173.2M320.1 147.5L305.3 173.2M320.1 147.5L334.9 156.1M320.1 147.5L320.1 164.6M320.1 147.5L305.3 156.1M320.1 147.5L305.3 139.0M320.1 147.5L320.1 130.4M320.1 147.5L334.9 139.0M349.7 147.5L364.5 173.2M349.7 147.5L334.9 173.2M349.7 147.5L364.5 156.1M349.7 147.5L349.7 164.6M349.7 147.5L334.9 156.1M349.7 147.5L334.9 139.0M349.7 147.5L349.7 130.4M349.7 147.5L364.5 139.0M379.3 147.5L394.2 173.2M379.3 147.5L364.5 173.2M379.3 147.5L394.2 156.1M379.3 147.5L379.3 164.6M379.3 147.5L364.5 156.1M379.3 147.5L364.5 139.0M379.3 147.5L379.3 130.4M379.3 147.5L394.2 139.0M409.0 147.5L423.8 173.2M409.0 147.5L394.2 173.2M409.0 147.5L423.8 156.1M409.0 147.5L409.0 164.6M409.0 147.5L394.2 156.1M409.0 147.5L394.2 139.0M409.0 147.5L409.0 130.4M409.0 147.5L423.8 139.0M438.6 147.5L453.4 173.2M438.6 147.5L423.8 173.2M438.6 147.5L453.4 156.1M438.6 147.5L438.6 164.6M438.6 147.5L423.8 156.1M438.6 147.5L423.8 139.0M438.6 147.5L438.6 130.4M438.6 147.5L453.4 139.0M468.2 147.5L483.0 173.2M468.2 147.5L453.4 173.2M468.2 147.5L483.0 156.1M468.2 147.5L468.2 164.6M468.2 147.5L453.4 156.1M468.2 147.5L453.4 139.0M468.2 147.5L468.2 130.4M468.2 147.5L483.0 139.0M497.8 147.5L512.6 173.2M497.8 147.5L483.0 173.2M497.8 147.5L512.6 156.1M497.8 147.5L497.8 164.6M497.8 147.5L483.0 156.1M497.8 147.5L483.0 139.0M497.8 147.5L497.8 130.4M497.8 147.5L512.6 139.0M527.4 147.5L542.2 173.2M527.4 147.5L512.6 173.2M527.4 147.5L542.2 156.1M527.4 147.5L527.4 164.6M527.4 147.5L512.6 156.1M527.4 147.5L512.6 139.0M527.4 147.5L527.4 130.4M527.4 147.5L542.2 139.0M557.1 147.5L571.9 173.2M557.1 147.5L542.3 173.2M557.1 147.5L571.9 156.1M557.1 147.5L557.1 164.6M557.1 147.5L542.3 156.1M557.1 147.5L542.3 139.0M557.1 147.5L557.1 130.4M557.1 147.5L571.9 139.0M275.7 173.2L290.5 198.8M275.7 173.2L260.9 198.8M275.7 173.2L290.5 181.7M275.7 173.2L275.7 190.3M275.7 173.2L260.9 181.7M275.7 173.2L260.9 164.6M275.7 173.2L275.7 156.1M275.7 173.2L290.5 164.6M305.3 173.2L320.1 198.8M305.3 173.2L290.5 198.8M305.3 173.2L320.1 181.7M305.3 173.2L305.3 190.3M305.3 173.2L290.5 181.7M305.3 173.2L290.5 164.6M305.3 173.2L305.3 156.1M305.3 173.2L320.1 164.6M334.9 173.2L349.7 198.8M334.9 173.2L320.1 198.8M334.9 173.2L349.7 181.7M334.9 173.2L334.9 190.3M334.9 173.2L320.1 181.7M334.9 173.2L320.1 164.6M334.9 173.2L334.9 156.1M334.9 173.2L349.7 164.6M364.5 173.2L379.3 198.8M364.5 173.2L349.7 198.8M364.5 173.2L379.3 181.7M364.5 173.2L364.5 190.3M364.5 173.2L349.7 181.7M364.5 173.2L349.7 164.6M364.5 173.2L364.5 156.1M364.5 173.2L379.3 164.6M394.2 173.2L409.0 198.8M394.2 173.2L379.3 198.8M394.2 173.2L409.0 181.7M394.2 173.2L394.2 190.3M394.2 173.2L379.3 181.7M394.2 173.2L379.3 164.6M394.2 173.2L394.2 156.1M394.2 173.2L409.0 164.6M423.8 173.2L438.6 198.8M423.8 173.2L409.0 198.8M423.8 173.2L438.6 181.7M423.8 173.2L423.8 190.3M423.8 173.2L409.0 181.7M423.8 173.2L409.0 164.6M423.8 173.2L423.8 156.1M423.8 173.2L438.6 164.6M453.4 173.2L468.2 198.8M453.4 173.2L438.6 198.8M453.4 173.2L468.2 181.7M453.4 173.2L453.4 190.3M453.4 173.2L438.6 181.7M453.4 173.2L438.6 164.6M453.4 173.2L453.4 156.1M453.4 173.2L468.2 164.6M483.0 173.2L497.8 198.8M483.0 173.2L468.2 198.8M483.0 173.2L497.8 181.7M483.0 173.2L483.0 190.3M483.0 173.2L468.2 181.7M483.0 173.2L468.2 164.6M483.0 173.2L483.0 156.1M483.0 173.2L497.8 164.6M512.6 173.2L527.4 198.8M512.6 173.2L497.8 198.8M512.6 173.2L527.4 181.7M512.6 173.2L512.6 190.3M512.6 173.2L497.8 181.7M512.6 173.2L497.8 164.6M512.6 173.2L512.6 156.1M512.6 173.2L527.4 164.6M542.2 173.2L557.1 198.8M542.2 173.2L527.4 198.8M542.2 173.2L557.1 181.7M542.2 173.2L542.2 190.3M542.2 173.2L527.4 181.7M542.2 173.2L527.4 164.6M542.2 173.2L542.2 156.1M542.2 173.2L557.1 164.6M571.9 173.2L586.7 198.8M571.9 173.2L557.1 198.8M571.9 173.2L586.7 181.7M571.9 173.2L571.9 190.3M571.9 173.2L557.1 181.7M571.9 173.2L557.1 164.6M571.9 173.2L571.9 156.1M571.9 173.2L586.7 164.6M260.9 198.8L275.7 224.5M260.9 198.8L246.1 224.5M260.9 198.8L275.7 207.4M260.9 198.8L260.9 215.9M260.9 198.8L246.1 207.4M260.9 198.8L246.1 190.3M260.9 198.8L260.9 181.7M260.9 198.8L275.7 190.3M290.5 198.8L305.3 224.5M290.5 198.8L275.7 224.5M290.5 198.8L305.3 207.4M290.5 198.8L290.5 215.9M290.5 198.8L275.7 207.4M290.5 198.8L275.7 190.3M290.5 198.8L290.5 181.7M290.5 198.8L305.3 190.3M320.1 198.8L334.9 224.5M320.1 198.8L305.3 224.5M320.1 198.8L334.9 207.4M320.1 198.8L320.1 215.9M320.1 198.8L305.3 207.4M320.1 198.8L305.3 190.3M320.1 198.8L320.1 181.7M320.1 198.8L334.9 190.3M349.7 198.8L364.5 224.5M349.7 198.8L334.9 224.5M349.7 198.8L364.5 207.4M349.7 198.8L349.7 215.9M349.7 198.8L334.9 207.4M349.7 198.8L334.9 190.3M349.7 198.8L349.7 181.7M349.7 198.8L364.5 190.3M379.3 198.8L394.2 224.5M379.3 198.8L364.5 224.5M379.3 198.8L394.2 207.4M379.3 198.8L379.3 215.9M379.3 198.8L364.5 207.4M379.3 198.8L364.5 190.3M379.3 198.8L379.3 181.7M379.3 198.8L394.2 190.3M409.0 198.8L423.8 224.5M409.0 198.8L394.2 224.5M409.0 198.8L423.8 207.4M409.0 198.8L409.0 215.9M409.0 198.8L394.2 207.4M409.0 198.8L394.2 190.3M409.0 198.8L409.0 181.7M409.0 198.8L423.8 190.3M438.6 198.8L453.4 224.5M438.6 198.8L423.8 224.5M438.6 198.8L453.4 207.4M438.6 198.8L438.6 215.9M438.6 198.8L423.8 207.4M438.6 198.8L423.8 190.3M438.6 198.8L438.6 181.7M438.6 198.8L453.4 190.3M468.2 198.8L483.0 224.5M468.2 198.8L453.4 224.5M468.2 198.8L483.0 207.4M468.2 198.8L468.2 215.9M468.2 198.8L453.4 207.4M468.2 198.8L453.4 190.3M468.2 198.8L468.2 181.7M468.2 198.8L483.0 190.3M497.8 198.8L512.6 224.5M497.8 198.8L483.0 224.5M497.8 198.8L512.6 207.4M497.8 198.8L497.8 215.9M497.8 198.8L483.0 207.4M497.8 198.8L483.0 190.3M497.8 198.8L497.8 181.7M497.8 198.8L512.6 190.3M527.4 198.8L542.2 224.5M527.4 198.8L512.6 224.5M527.4 198.8L542.2 207.4M527.4 198.8L527.4 215.9M527.4 198.8L512.6 207.4M527.4 198.8L512.6 190.3M527.4 198.8L527.4 181.7M527.4 198.8L542.2 190.3M557.1 198.8L571.9 224.5M557.1 198.8L542.3 224.5M557.1 198.8L571.9 207.4M557.1 198.8L557.1 215.9M557.1 198.8L542.3 207.4M557.1 198.8L542.3 190.3M557.1 198.8L557.1 181.7M557.1 198.8L571.9 190.3M275.7 224.5L290.5 250.1M275.7 224.5L260.9 250.1M275.7 224.5L290.5 233.0M275.7 224.5L275.7 241.6M275.7 224.5L260.9 233.0M275.7 224.5L260.9 215.9M275.7 224.5L275.7 207.4M275.7 224.5L290.5 215.9M305.3 224.5L320.1 250.1M305.3 224.5L290.5 250.1M305.3 224.5L320.1 233.0M305.3 224.5L305.3 241.6M305.3 224.5L290.5 233.0M305.3 224.5L290.5 215.9M305.3 224.5L305.3 207.4M305.3 224.5L320.1 215.9M334.9 224.5L349.7 250.1M334.9 224.5L320.1 250.1M334.9 224.5L349.7 233.0M334.9 224.5L334.9 241.6M334.9 224.5L320.1 233.0M334.9 224.5L320.1 215.9M334.9 224.5L334.9 207.4M334.9 224.5L349.7 215.9M364.5 224.5L379.3 250.1M364.5 224.5L349.7 250.1M364.5 224.5L379.3 233.0M364.5 224.5L364.5 241.6M364.5 224.5L349.7 233.0M364.5 224.5L349.7 215.9M364.5 224.5L364.5 207.4M364.5 224.5L379.3 215.9M394.2 224.5L409.0 250.1M394.2 224.5L379.3 250.1M394.2 224.5L409.0 233.0M394.2 224.5L394.2 241.6M394.2 224.5L379.3 233.0M394.2 224.5L379.3 215.9M394.2 224.5L394.2 207.4M394.2 224.5L409.0 215.9M423.8 224.5L438.6 250.1M423.8 224.5L409.0 250.1M423.8 224.5L438.6 233.0M423.8 224.5L423.8 241.6M423.8 224.5L409.0 233.0M423.8 224.5L409.0 215.9M423.8 224.5L423.8 207.4M423.8 224.5L438.6 215.9M453.4 224.5L468.2 250.1M453.4 224.5L438.6 250.1M453.4 224.5L468.2 233.0M453.4 224.5L453.4 241.6M453.4 224.5L438.6 233.0M453.4 224.5L438.6 215.9M453.4 224.5L453.4 207.4M453.4 224.5L468.2 215.9M483.0 224.5L497.8 250.1M483.0 224.5L468.2 250.1M483.0 224.5L497.8 233.0M483.0 224.5L483.0 241.6M483.0 224.5L468.2 233.0M483.0 224.5L468.2 215.9M483.0 224.5L483.0 207.4M483.0 224.5L497.8 215.9M512.6 224.5L527.4 250.1M512.6 224.5L497.8 250.1M512.6 224.5L527.4 233.0M512.6 224.5L512.6 241.6M512.6 224.5L497.8 233.0M512.6 224.5L497.8 215.9M512.6 224.5L512.6 207.4M512.6 224.5L527.4 215.9M542.2 224.5L557.1 250.1M542.2 224.5L527.4 250.1M542.2 224.5L557.1 233.0M542.2 224.5L542.2 241.6M542.2 224.5L527.4 233.0M542.2 224.5L527.4 215.9M542.2 224.5L542.2 207.4M542.2 224.5L557.1 215.9M571.9 224.5L586.7 250.1M571.9 224.5L557.1 250.1M571.9 224.5L586.7 233.0M571.9 224.5L571.9 241.6M571.9 224.5L557.1 233.0M571.9 224.5L557.1 215.9M571.9 224.5L571.9 207.4M571.9 224.5L586.7 215.9M260.9 250.1L275.7 275.8M260.9 250.1L246.1 275.8M260.9 250.1L275.7 258.7M260.9 250.1L260.9 267.2M260.9 250.1L246.1 258.7M260.9 250.1L246.1 241.6M260.9 250.1L260.9 233.0M260.9 250.1L275.7 241.6M290.5 250.1L305.3 275.8M290.5 250.1L275.7 275.8M290.5 250.1L305.3 258.7M290.5 250.1L290.5 267.2M290.5 250.1L275.7 258.7M290.5 250.1L275.7 241.6M290.5 250.1L290.5 233.0M290.5 250.1L305.3 241.6M320.1 250.1L334.9 275.8M320.1 250.1L305.3 275.8M320.1 250.1L334.9 258.7M320.1 250.1L320.1 267.2M320.1 250.1L305.3 258.7M320.1 250.1L305.3 241.6M320.1 250.1L320.1 233.0M320.1 250.1L334.9 241.6M349.7 250.1L364.5 275.8M349.7 250.1L334.9 275.8M349.7 250.1L364.5 258.7M349.7 250.1L349.7 267.2M349.7 250.1L334.9 258.7M349.7 250.1L334.9 241.6M349.7 250.1L349.7 233.0M349.7 250.1L364.5 241.6M379.3 250.1L394.2 275.8M379.3 250.1L364.5 275.8M379.3 250.1L394.2 258.7M379.3 250.1L379.3 267.2M379.3 250.1L364.5 258.7M379.3 250.1L364.5 241.6M379.3 250.1L379.3 233.0M379.3 250.1L394.2 241.6M409.0 250.1L423.8 275.8M409.0 250.1L394.2 275.8M409.0 250.1L423.8 258.7M409.0 250.1L409.0 267.2M409.0 250.1L394.2 258.7M409.0 250.1L394.2 241.6M409.0 250.1L409.0 233.0M409.0 250.1L423.8 241.6M438.6 250.1L453.4 275.8M438.6 250.1L423.8 275.8M438.6 250.1L453.4 258.7M438.6 250.1L438.6 267.2M438.6 250.1L423.8 258.7M438.6 250.1L423.8 241.6M438.6 250.1L438.6 233.0M438.6 250.1L453.4 241.6M468.2 250.1L483.0 275.8M468.2 250.1L453.4 275.8M468.2 250.1L483.0 258.7M468.2 250.1L468.2 267.2M468.2 250.1L453.4 258.7M468.2 250.1L453.4 241.6M468.2 250.1L468.2 233.0M468.2 250.1L483.0 241.6M497.8 250.1L512.6 275.8M497.8 250.1L483.0 275.8M497.8 250.1L512.6 258.7M497.8 250.1L497.8 267.2M497.8 250.1L483.0 258.7M497.8 250.1L483.0 241.6M497.8 250.1L497.8 233.0M497.8 250.1L512.6 241.6M527.4 250.1L542.2 275.8M527.4 250.1L512.6 275.8M527.4 250.1L542.2 258.7M527.4 250.1L527.4 267.2M527.4 250.1L512.6 258.7M527.4 250.1L512.6 241.6M527.4 250.1L527.4 233.0M527.4 250.1L542.2 241.6M557.1 250.1L571.9 275.8M557.1 250.1L542.3 275.8M557.1 250.1L571.9 258.7M557.1 250.1L557.1 267.2M557.1 250.1L542.3 258.7M557.1 250.1L542.3 241.6M557.1 250.1L557.1 233.0M557.1 250.1L571.9 241.6M275.7 275.8L290.5 301.4M275.7 275.8L260.9 301.4M275.7 275.8L290.5 284.3M275.7 275.8L275.7 292.9M275.7 275.8L260.9 284.3M275.7 275.8L260.9 267.2M275.7 275.8L275.7 258.7M275.7 275.8L290.5 267.2M305.3 275.8L320.1 301.4M305.3 275.8L290.5 301.4M305.3 275.8L320.1 284.3M305.3 275.8L305.3 292.9M305.3 275.8L290.5 284.3M305.3 275.8L290.5 267.2M305.3 275.8L305.3 258.7M305.3 275.8L320.1 267.2M334.9 275.8L349.7 301.4M334.9 275.8L320.1 301.4M334.9 275.8L349.7 284.3M334.9 275.8L334.9 292.9M334.9 275.8L320.1 284.3M334.9 275.8L320.1 267.2M334.9 275.8L334.9 258.7M334.9 275.8L349.7 267.2M364.5 275.8L379.3 301.4M364.5 275.8L349.7 301.4M364.5 275.8L379.3 284.3M364.5 275.8L364.5 292.9M364.5 275.8L349.7 284.3M364.5 275.8L349.7 267.2M364.5 275.8L364.5 258.7M364.5 275.8L379.3 267.2M394.2 275.8L409.0 301.4M394.2 275.8L379.3 301.4M394.2 275.8L409.0 284.3M394.2 275.8L394.2 292.9M394.2 275.8L379.3 284.3M394.2 275.8L379.3 267.2M394.2 275.8L394.2 258.7M394.2 275.8L409.0 267.2M423.8 275.8L438.6 301.4M423.8 275.8L409.0 301.4M423.8 275.8L438.6 284.3M423.8 275.8L423.8 292.9M423.8 275.8L409.0 284.3M423.8 275.8L409.0 267.2M423.8 275.8L423.8 258.7M423.8 275.8L438.6 267.2M453.4 275.8L468.2 301.4M453.4 275.8L438.6 301.4M453.4 275.8L468.2 284.3M453.4 275.8L453.4 292.9M453.4 275.8L438.6 284.3M453.4 275.8L438.6 267.2M453.4 275.8L453.4 258.7M453.4 275.8L468.2 267.2M483.0 275.8L497.8 301.4M483.0 275.8L468.2 301.4M483.0 275.8L497.8 284.3M483.0 275.8L483.0 292.9M483.0 275.8L468.2 284.3M483.0 275.8L468.2 267.2M483.0 275.8L483.0 258.7M483.0 275.8L497.8 267.2M512.6 275.8L527.4 301.4M512.6 275.8L497.8 301.4M512.6 275.8L527.4 284.3M512.6 275.8L512.6 292.9M512.6 275.8L497.8 284.3M512.6 275.8L497.8 267.2M512.6 275.8L512.6 258.7M512.6 275.8L527.4 267.2M542.2 275.8L557.1 301.4M542.2 275.8L527.4 301.4M542.2 275.8L557.1 284.3M542.2 275.8L542.2 292.9M542.2 275.8L527.4 284.3M542.2 275.8L527.4 267.2M542.2 275.8L542.2 258.7M542.2 275.8L557.1 267.2M571.9 275.8L586.7 301.4M571.9 275.8L557.1 301.4M571.9 275.8L586.7 284.3M571.9 275.8L571.9 292.9M571.9 275.8L557.1 284.3M571.9 275.8L557.1 267.2M571.9 275.8L571.9 258.7M571.9 275.8L586.7 267.2M260.9 301.4L275.7 327.1M260.9 301.4L246.1 327.1M260.9 301.4L275.7 310.0M260.9 301.4L260.9 318.5M260.9 301.4L246.1 310.0M260.9 301.4L246.1 292.9M260.9 301.4L260.9 284.3M260.9 301.4L275.7 292.9M290.5 301.4L305.3 327.1M290.5 301.4L275.7 327.1M290.5 301.4L305.3 310.0M290.5 301.4L290.5 318.5M290.5 301.4L275.7 310.0M290.5 301.4L275.7 292.9M290.5 301.4L290.5 284.3M290.5 301.4L305.3 292.9M320.1 301.4L334.9 327.1M320.1 301.4L305.3 327.1M320.1 301.4L334.9 310.0M320.1 301.4L320.1 318.5M320.1 301.4L305.3 310.0M320.1 301.4L305.3 292.9M320.1 301.4L320.1 284.3M320.1 301.4L334.9 292.9M349.7 301.4L364.5 327.1M349.7 301.4L334.9 327.1M349.7 301.4L364.5 310.0M349.7 301.4L349.7 318.5M349.7 301.4L334.9 310.0M349.7 301.4L334.9 292.9M349.7 301.4L349.7 284.3M349.7 301.4L364.5 292.9M379.3 301.4L394.2 327.1M379.3 301.4L364.5 327.1M379.3 301.4L394.2 310.0M379.3 301.4L379.3 318.5M379.3 301.4L364.5 310.0M379.3 301.4L364.5 292.9M379.3 301.4L379.3 284.3M379.3 301.4L394.2 292.9M409.0 301.4L423.8 327.1M409.0 301.4L394.2 327.1M409.0 301.4L423.8 310.0M409.0 301.4L409.0 318.5M409.0 301.4L394.2 310.0M409.0 301.4L394.2 292.9M409.0 301.4L409.0 284.3M409.0 301.4L423.8 292.9M438.6 301.4L453.4 327.1M438.6 301.4L423.8 327.1M438.6 301.4L453.4 310.0M438.6 301.4L438.6 318.5M438.6 301.4L423.8 310.0M438.6 301.4L423.8 292.9M438.6 301.4L438.6 284.3M438.6 301.4L453.4 292.9M468.2 301.4L483.0 327.1M468.2 301.4L453.4 327.1M468.2 301.4L483.0 310.0M468.2 301.4L468.2 318.5M468.2 301.4L453.4 310.0M468.2 301.4L453.4 292.9M468.2 301.4L468.2 284.3M468.2 301.4L483.0 292.9M497.8 301.4L512.6 327.1M497.8 301.4L483.0 327.1M497.8 301.4L512.6 310.0M497.8 301.4L497.8 318.5M497.8 301.4L483.0 310.0M497.8 301.4L483.0 292.9M497.8 301.4L497.8 284.3M497.8 301.4L512.6 292.9M527.4 301.4L542.2 327.1M527.4 301.4L512.6 327.1M527.4 301.4L542.2 310.0M527.4 301.4L527.4 318.5M527.4 301.4L512.6 310.0M527.4 301.4L512.6 292.9M527.4 301.4L527.4 284.3M527.4 301.4L542.2 292.9M557.1 301.4L571.9 327.1M557.1 301.4L542.3 327.1M557.1 301.4L571.9 310.0M557.1 301.4L557.1 318.5M557.1 301.4L542.3 310.0M557.1 301.4L542.3 292.9M557.1 301.4L557.1 284.3M557.1 301.4L571.9 292.9" stroke="#88c1da" stroke-width="0.800" fill="none"/><g fill="#62aed0" fill-opacity="0.800"><circle cx="320.1" cy="96.2" r="1.500"/><circle cx="349.7" cy="96.2" r="1.500"/><circle cx="379.3" cy="96.2" r="1.500"/><circle cx="409.0" cy="96.2" r="1.500"/><circle cx="438.6" cy="96.2" r="1.500"/><circle cx="468.2" cy="96.2" r="1.500"/><circle cx="497.8" cy="96.2" r="1.500"/><circle cx="334.9" cy="121.9" r="1.500"/><circle cx="364.5" cy="121.9" r="1.500"/><circle cx="394.2" cy="121.9" r="1.500"/><circle cx="423.8" cy="121.9" r="1.500"/><circle cx="453.4" cy="121.9" r="1.500"/><circle cx="483.0" cy="121.9" r="1.500"/><circle cx="320.1" cy="147.5" r="1.500"/><circle cx="349.7" cy="147.5" r="1.500"/><circle cx="379.3" cy="147.5" r="1.500"/><circle cx="409.0" cy="147.5" r="1.500"/><circle cx="438.6" cy="147.5" r="1.500"/><circle cx="468.2" cy="147.5" r="1.500"/><circle cx="497.8" cy="147.5" r="1.500"/><circle cx="334.9" cy="173.2" r="1.500"/><circle cx="364.5" cy="173.2" r="1.500"/><circle cx="394.2" cy="173.2" r="1.500"/><circle cx="423.8" cy="173.2" r="1.500"/><circle cx="453.4" cy="173.2" r="1.500"/><circle cx="483.0" cy="173.2" r="1.500"/><circle cx="320.1" cy="198.8" r="1.500"/><circle cx="349.7" cy="198.8" r="1.500"/><circle cx="379.3" cy="198.8" r="1.500"/><circle cx="409.0" cy="198.8" r="1.500"/><circle cx="438.6" cy="198.8" r="1.500"/><circle cx="468.2" cy="198.8" r="1.500"/><circle cx="497.8" cy="198.8" r="1.500"/><circle cx="334.9" cy="224.5" r="1.500"/><circle cx="364.5" cy="224.5" r="1.500"/><circle cx="394.2" cy="224.5" r="1.500"/><circle cx="423.8" cy="224.5" r="1.500"/><circle cx="453.4" cy="224.5" r="1.500"/><circle cx="483.0" cy="224.5" r="1.500"/><circle cx="320.1" cy="250.1" r="1.500"/><circle cx="349.7" cy="250.1" r="1.500"/><circle cx="379.3" cy="250.1" r="1.500"/><circle cx="409.0" cy="250.1" r="1.500"/><circle cx="438.6" cy="250.1" r="1.500"/><circle cx="468.2" cy="250.1" r="1.500"/><circle cx="497.8" cy="250.1" r="1.500"/></g></svg><div class="t" id="tsn" style="left:48.300px;top:162.500px;font-size:7.860px;line-height:10px;font-weight:400;color:#0a0a0a;letter-spacing:-0.120px;-webkit-text-stroke:0.120px #0a0a0a">Shop Name</div><svg class="ic" style="left:34.600px;top:180px" width="19.800" height="19.800" viewBox="0 0 29 29" shape-rendering="auto"><path d="M0 0h7v1h-7zM8 0h5v1h-5zM14 0h2v1h-2zM19 0h1v1h-1zM22 0h7v1h-7zM0 1h1v1h-1zM6 1h1v1h-1zM8 1h2v1h-2zM11 1h2v1h-2zM15 1h1v1h-1zM20 1h1v1h-1zM22 1h1v1h-1zM28 1h1v1h-1zM0 2h1v1h-1zM2 2h3v1h-3zM6 2h1v1h-1zM10 2h1v1h-1zM12 2h1v1h-1zM17 2h2v1h-2zM20 2h1v1h-1zM22 2h1v1h-1zM24 2h3v1h-3zM28 2h1v1h-1zM0 3h1v1h-1zM2 3h3v1h-3zM6 3h1v1h-1zM8 3h2v1h-2zM12 3h5v1h-5zM18 3h3v1h-3zM22 3h1v1h-1zM24 3h3v1h-3zM28 3h1v1h-1zM0 4h1v1h-1zM2 4h3v1h-3zM6 4h1v1h-1zM8 4h11v1h-11zM22 4h1v1h-1zM24 4h3v1h-3zM28 4h1v1h-1zM0 5h1v1h-1zM6 5h1v1h-1zM10 5h1v1h-1zM12 5h1v1h-1zM17 5h3v1h-3zM22 5h1v1h-1zM28 5h1v1h-1zM0 6h7v1h-7zM8 6h1v1h-1zM10 6h1v1h-1zM12 6h1v1h-1zM14 6h1v1h-1zM16 6h1v1h-1zM18 6h1v1h-1zM20 6h1v1h-1zM22 6h7v1h-7zM8 7h2v1h-2zM12 7h3v1h-3zM17 7h1v1h-1zM0 8h1v1h-1zM3 8h4v1h-4zM8 8h3v1h-3zM12 8h2v1h-2zM16 8h1v1h-1zM21 8h4v1h-4zM26 8h2v1h-2zM1 9h1v1h-1zM5 9h1v1h-1zM7 9h2v1h-2zM14 9h1v1h-1zM19 9h1v1h-1zM21 9h1v1h-1zM26 9h1v1h-1zM1 10h6v1h-6zM10 10h1v1h-1zM13 10h1v1h-1zM16 10h1v1h-1zM18 10h2v1h-2zM22 10h2v1h-2zM25 10h3v1h-3zM0 11h1v1h-1zM2 11h3v1h-3zM7 11h1v1h-1zM11 11h3v1h-3zM15 11h3v1h-3zM20 11h2v1h-2zM25 11h2v1h-2zM28 11h1v1h-1zM0 12h1v1h-1zM4 12h1v1h-1zM6 12h1v1h-1zM8 12h2v1h-2zM12 12h2v1h-2zM15 12h7v1h-7zM23 12h1v1h-1zM25 12h4v1h-4zM0 13h1v1h-1zM3 13h2v1h-2zM8 13h2v1h-2zM11 13h1v1h-1zM15 13h1v1h-1zM19 13h5v1h-5zM25 13h3v1h-3zM2 14h7v1h-7zM12 14h1v1h-1zM14 14h5v1h-5zM20 14h1v1h-1zM22 14h7v1h-7zM0 15h1v1h-1zM7 15h2v1h-2zM10 15h1v1h-1zM13 15h1v1h-1zM19 15h1v1h-1zM0 16h5v1h-5zM6 16h1v1h-1zM10 16h2v1h-2zM17 16h1v1h-1zM19 16h3v1h-3zM23 16h1v1h-1zM26 16h3v1h-3zM4 17h2v1h-2zM8 17h1v1h-1zM10 17h3v1h-3zM16 17h1v1h-1zM18 17h3v1h-3zM22 17h1v1h-1zM25 17h2v1h-2zM0 18h3v1h-3zM4 18h1v1h-1zM6 18h1v1h-1zM9 18h1v1h-1zM14 18h1v1h-1zM16 18h9v1h-9zM26 18h1v1h-1zM0 19h1v1h-1zM4 19h2v1h-2zM9 19h5v1h-5zM15 19h1v1h-1zM17 19h2v1h-2zM20 19h2v1h-2zM1 20h1v1h-1zM3 20h1v1h-1zM6 20h2v1h-2zM9 20h4v1h-4zM15 20h1v1h-1zM17 20h1v1h-1zM19 20h7v1h-7zM28 20h1v1h-1zM10 21h2v1h-2zM13 21h4v1h-4zM18 21h1v1h-1zM20 21h1v1h-1zM24 21h3v1h-3zM0 22h7v1h-7zM8 22h1v1h-1zM13 22h3v1h-3zM20 22h1v1h-1zM22 22h1v1h-1zM24 22h1v1h-1zM26 22h1v1h-1zM0 23h1v1h-1zM6 23h1v1h-1zM9 23h2v1h-2zM12 23h3v1h-3zM18 23h3v1h-3zM24 23h2v1h-2zM27 23h2v1h-2zM0 24h1v1h-1zM2 24h3v1h-3zM6 24h1v1h-1zM11 24h1v1h-1zM13 24h1v1h-1zM15 24h2v1h-2zM18 24h1v1h-1zM20 24h5v1h-5zM26 24h3v1h-3zM0 25h1v1h-1zM2 25h3v1h-3zM6 25h1v1h-1zM10 25h2v1h-2zM14 25h1v1h-1zM16 25h7v1h-7zM24 25h1v1h-1zM26 25h2v1h-2zM0 26h1v1h-1zM2 26h3v1h-3zM6 26h1v1h-1zM9 26h2v1h-2zM13 26h3v1h-3zM17 26h1v1h-1zM20 26h2v1h-2zM24 26h1v1h-1zM26 26h3v1h-3zM0 27h1v1h-1zM6 27h1v1h-1zM9 27h4v1h-4zM14 27h1v1h-1zM20 27h3v1h-3zM24 27h2v1h-2zM27 27h2v1h-2zM0 28h7v1h-7zM8 28h2v1h-2zM11 28h3v1h-3zM19 28h1v1h-1zM21 28h1v1h-1zM23 28h1v1h-1zM25 28h4v1h-4z" fill="#222"/></svg><svg class="ic" style="left:26.760px;top:75.500px" width="83.850" height="132.900" viewBox="0 0 188 298" font-family="Liberation Sans, sans-serif" text-rendering="geometricPrecision"><text x="70.800" y="244.600" font-size="6.400" fill="#666" letter-spacing="0.090">By accessing the QRcode,</text><text x="70.800" y="253.900" font-size="6.400" fill="#666" letter-spacing="0.090">you agree to the access analysis.</text><path d="M70 265l2.300.700 1.500 6.200" fill="none" stroke="#1c3f8f" stroke-width="0.800"/><text x="72.300" y="271.500" font-size="10" fill="#1c3f8f" transform="translate(72.300 0) scale(0.620 1) translate(-72.300 0)">W</text><text x="78.200" y="270.600" font-size="5.850" fill="#2f95e4" stroke="#2f95e4" stroke-width="0.250"><tspan fill="#2a6bc0">orld</tspan>Shopping</text><text x="115.800" y="270.600" font-size="5.450" fill="#444">Purchasing Supporter</text></svg><svg class="ic" style="left:15.55px;top:378.45px" width="11.30" height="11.30" viewBox="0 0 24 24"><path d="M3 3v8h8V3H3zm6 6H5V5h4v4zm-6 4v8h8v-8H3zm6 6H5v-4h4v4zm4-16v8h8V3h-8zm6 6h-4V5h4v4zm-6 4v8h8v-8h-8zm6 6h-4v-4h4v4z" fill="#444746" stroke="#444746" stroke-width="0.00"/></svg><svg class="ic" style="left:43.00px;top:379.00px" width="11.00" height="11.00" viewBox="0 0 24 24"><path d="M15.41 7.41L14 6l-6 6 6 6 1.41-1.41L10.83 12z" fill="#444746" stroke="#444746" stroke-width="0.30"/></svg><svg class="ic" style="left:0;top:0" width="670" height="405" viewBox="0 0 670 405"><defs><linearGradient id="vf" x1="0" y1="0" x2="0" y2="1"><stop offset="0" stop-color="#a3a5a8"/><stop offset="0.960" stop-color="#a3a5a8"/><stop offset="1" stop-color="#a3a5a8" stop-opacity="0"/></linearGradient></defs><path d="M134.500 83.500V72.300H670" fill="none" stroke="#d6d8db" stroke-width="0.900"/><path d="M313.300 72.300H501.600" fill="none" stroke="#a3a5a8" stroke-width="0.900"/><rect x="134.100" y="83.300" width="0.850" height="308" fill="url(#vf)"/><g stroke="#9fa1a4" stroke-width="0.750"><path d="M313.50 70.00V72.300"/><path d="M321.20 70.00V72.300"/><path d="M328.90 67.90V72.300"/><path d="M336.60 70.00V72.300"/><path d="M344.30 70.00V72.300"/><path d="M352.00 70.00V72.300"/><path d="M359.70 67.90V72.300"/><path d="M367.40 70.00V72.300"/><path d="M375.10 70.00V72.300"/><path d="M382.80 70.00V72.300"/><path d="M390.50 67.90V72.300"/><path d="M398.20 70.00V72.300"/><path d="M405.90 70.00V72.300"/><path d="M413.60 70.00V72.300"/><path d="M421.30 67.90V72.300"/><path d="M429.00 70.00V72.300"/><path d="M436.70 70.00V72.300"/><path d="M444.40 70.00V72.300"/><path d="M452.10 67.90V72.300"/><path d="M459.80 70.00V72.300"/><path d="M467.50 70.00V72.300"/><path d="M475.20 70.00V72.300"/><path d="M482.90 67.90V72.300"/><path d="M490.60 70.00V72.300"/><path d="M498.30 70.00V72.300"/><path d="M131.50 83.60H134.500"/><path d="M132.20 91.30H134.500"/><path d="M129.90 99.00H134.500"/><path d="M132.20 106.70H134.500"/><path d="M131.50 114.40H134.500"/><path d="M132.20 122.10H134.500"/><path d="M129.90 129.80H134.500"/><path d="M132.20 137.50H134.500"/><path d="M131.50 145.20H134.500"/><path d="M132.20 152.90H134.500"/><path d="M129.90 160.60H134.500"/><path d="M132.20 168.30H134.500"/><path d="M131.50 176.00H134.500"/><path d="M132.20 183.70H134.500"/><path d="M129.90 191.40H134.500"/><path d="M132.20 199.10H134.500"/><path d="M131.50 206.80H134.500"/><path d="M132.20 214.50H134.500"/><path d="M129.90 222.20H134.500"/><path d="M132.20 229.90H134.500"/><path d="M131.50 237.60H134.500"/><path d="M132.20 245.30H134.500"/><path d="M129.90 253.00H134.500"/><path d="M132.20 260.70H134.500"/><path d="M131.50 268.40H134.500"/><path d="M132.20 276.10H134.500"/><path d="M129.90 283.80H134.500"/><path d="M132.20 291.50H134.500"/><path d="M131.50 299.20H134.500"/><path d="M132.20 306.90H134.500"/><path d="M129.90 314.60H134.500"/><path d="M132.20 322.30H134.500"/><path d="M131.50 330.00H134.500"/><path d="M132.20 337.70H134.500"/><path d="M129.90 345.40H134.500"/><path d="M132.20 353.10H134.500"/><path d="M131.50 360.80H134.500"/><path d="M132.20 368.50H134.500"/><path d="M129.90 376.20H134.500"/><path d="M132.20 383.90H134.500"/></g><g font-family="Liberation Sans, sans-serif" font-size="7" fill="#4a4e53" text-anchor="middle"><text x="344.50" y="68.700">1</text><text x="375.30" y="68.700">2</text><text x="406.10" y="68.700">3</text><text x="436.90" y="68.700">4</text><text x="467.70" y="68.700">5</text><text x="498.50" y="68.700">6</text><text transform="translate(131.500 114.70) rotate(-90)" x="0" y="0">1</text><text transform="translate(131.500 145.50) rotate(-90)" x="0" y="0">2</text><text transform="translate(131.500 176.30) rotate(-90)" x="0" y="0">3</text><text transform="translate(131.500 207.10) rotate(-90)" x="0" y="0">4</text><text transform="translate(131.500 237.90) rotate(-90)" x="0" y="0">5</text><text transform="translate(131.500 268.70) rotate(-90)" x="0" y="0">6</text><text transform="translate(131.500 299.50) rotate(-90)" x="0" y="0">7</text><text transform="translate(131.500 330.30) rotate(-90)" x="0" y="0">8</text><text transform="translate(131.500 361.10) rotate(-90)" x="0" y="0">9</text></g></svg><svg class="ic" style="left:0;top:0" width="670" height="405" viewBox="0 0 670 405"><rect x="312.800" y="84" width="188.300" height="297.600" fill="#fff"/><rect x="312.200" y="84" width="0.900" height="297.600" fill="#dfe1e4"/></svg><svg style="position:absolute;overflow:hidden;left:309.50px;top:79.50px" width="197.50" height="187.50" viewBox="309.50 79.50 197.50 187.50"><rect x="309.50" y="79.50" width="197.50" height="187.50" fill="#e3f1f8"/><path d="M275.7 36.3L275.7 53.4M305.3 36.3L305.3 53.4M334.9 36.3L334.9 53.4M364.5 36.3L364.5 53.4M394.2 36.3L394.2 53.4M423.8 36.3L423.8 53.4M453.4 36.3L453.4 53.4M483.0 36.3L483.0 53.4M512.6 36.3L512.6 53.4M542.2 36.3L542.2 53.4M571.9 36.3L571.9 53.4M290.5 62.0L290.5 79.1M320.1 62.0L320.1 79.1M349.7 62.0L349.7 79.1M379.3 62.0L379.3 79.1M409.0 62.0L409.0 79.1M438.6 62.0L438.6 79.1M468.2 62.0L468.2 79.1M497.8 62.0L497.8 79.1M527.4 62.0L527.4 79.1M557.1 62.0L557.1 79.1M586.7 62.0L586.7 79.1M275.7 87.6L275.7 104.8M305.3 87.6L305.3 104.8M334.9 87.6L334.9 104.8M364.5 87.6L364.5 104.8M394.2 87.6L394.2 104.8M423.8 87.6L423.8 104.8M453.4 87.6L453.4 104.8M483.0 87.6L483.0 104.8M512.6 87.6L512.6 104.8M542.2 87.6L542.2 104.8M571.9 87.6L571.9 104.8M290.5 113.3L290.5 130.4M320.1 113.3L320.1 130.4M349.7 113.3L349.7 130.4M379.3 113.3L379.3 130.4M409.0 113.3L409.0 130.4M438.6 113.3L438.6 130.4M468.2 113.3L468.2 130.4M497.8 113.3L497.8 130.4M527.4 113.3L527.4 130.4M557.1 113.3L557.1 130.4M586.7 113.3L586.7 130.4M275.7 139.0L275.7 156.1M305.3 139.0L305.3 156.1M334.9 139.0L334.9 156.1M364.5 139.0L364.5 156.1M394.2 139.0L394.2 156.1M423.8 139.0L423.8 156.1M453.4 139.0L453.4 156.1M483.0 139.0L483.0 156.1M512.6 139.0L512.6 156.1M542.2 139.0L542.2 156.1M571.9 139.0L571.9 156.1M290.5 164.6L290.5 181.7M320.1 164.6L320.1 181.7M349.7 164.6L349.7 181.7M379.3 164.6L379.3 181.7M409.0 164.6L409.0 181.7M438.6 164.6L438.6 181.7M468.2 164.6L468.2 181.7M497.8 164.6L497.8 181.7M527.4 164.6L527.4 181.7M557.1 164.6L557.1 181.7M586.7 164.6L586.7 181.7M275.7 190.3L275.7 207.4M305.3 190.3L305.3 207.4M334.9 190.3L334.9 207.4M364.5 190.3L364.5 207.4M394.2 190.3L394.2 207.4M423.8 190.3L423.8 207.4M453.4 190.3L453.4 207.4M483.0 190.3L483.0 207.4M512.6 190.3L512.6 207.4M542.2 190.3L542.2 207.4M571.9 190.3L571.9 207.4M290.5 215.9L290.5 233.0M320.1 215.9L320.1 233.0M349.7 215.9L349.7 233.0M379.3 215.9L379.3 233.0M409.0 215.9L409.0 233.0M438.6 215.9L438.6 233.0M468.2 215.9L468.2 233.0M497.8 215.9L497.8 233.0M527.4 215.9L527.4 233.0M557.1 215.9L557.1 233.0M586.7 215.9L586.7 233.0M275.7 241.6L275.7 258.7M305.3 241.6L305.3 258.7M334.9 241.6L334.9 258.7M364.5 241.6L364.5 258.7M394.2 241.6L394.2 258.7M423.8 241.6L423.8 258.7M453.4 241.6L453.4 258.7M483.0 241.6L483.0 258.7M512.6 241.6L512.6 258.7M542.2 241.6L542.2 258.7M571.9 241.6L571.9 258.7M290.5 267.2L290.5 284.3M320.1 267.2L320.1 284.3M349.7 267.2L349.7 284.3M379.3 267.2L379.3 284.3M409.0 267.2L409.0 284.3M438.6 267.2L438.6 284.3M468.2 267.2L468.2 284.3M497.8 267.2L497.8 284.3M527.4 267.2L527.4 284.3M557.1 267.2L557.1 284.3M586.7 267.2L586.7 284.3M275.7 292.9L275.7 310.0M305.3 292.9L305.3 310.0M334.9 292.9L334.9 310.0M364.5 292.9L364.5 310.0M394.2 292.9L394.2 310.0M423.8 292.9L423.8 310.0M453.4 292.9L453.4 310.0M483.0 292.9L483.0 310.0M512.6 292.9L512.6 310.0M542.2 292.9L542.2 310.0M571.9 292.9L571.9 310.0" stroke="#d6eaf3" stroke-width="0.70" fill="none" stroke-opacity="0.400"/><path d="M260.9 44.9L290.5 44.9M290.5 44.9L320.1 44.9M320.1 44.9L349.7 44.9M349.7 44.9L379.3 44.9M379.3 44.9L409.0 44.9M409.0 44.9L438.6 44.9M438.6 44.9L468.2 44.9M468.2 44.9L497.8 44.9M497.8 44.9L527.4 44.9M527.4 44.9L557.1 44.9M557.1 44.9L586.7 44.9M275.7 70.5L305.3 70.5M305.3 70.5L334.9 70.5M334.9 70.5L364.5 70.5M364.5 70.5L394.2 70.5M394.2 70.5L423.8 70.5M423.8 70.5L453.4 70.5M453.4 70.5L483.0 70.5M483.0 70.5L512.6 70.5M512.6 70.5L542.2 70.5M542.2 70.5L571.9 70.5M571.9 70.5L601.5 70.5M260.9 96.2L290.5 96.2M290.5 96.2L320.1 96.2M320.1 96.2L349.7 96.2M349.7 96.2L379.3 96.2M379.3 96.2L409.0 96.2M409.0 96.2L438.6 96.2M438.6 96.2L468.2 96.2M468.2 96.2L497.8 96.2M497.8 96.2L527.4 96.2M527.4 96.2L557.1 96.2M557.1 96.2L586.7 96.2M275.7 121.9L305.3 121.9M305.3 121.9L334.9 121.9M334.9 121.9L364.5 121.9M364.5 121.9L394.2 121.9M394.2 121.9L423.8 121.9M423.8 121.9L453.4 121.9M453.4 121.9L483.0 121.9M483.0 121.9L512.6 121.9M512.6 121.9L542.2 121.9M542.2 121.9L571.9 121.9M571.9 121.9L601.5 121.9M260.9 147.5L290.5 147.5M290.5 147.5L320.1 147.5M320.1 147.5L349.7 147.5M349.7 147.5L379.3 147.5M379.3 147.5L409.0 147.5M409.0 147.5L438.6 147.5M438.6 147.5L468.2 147.5M468.2 147.5L497.8 147.5M497.8 147.5L527.4 147.5M527.4 147.5L557.1 147.5M557.1 147.5L586.7 147.5M275.7 173.2L305.3 173.2M305.3 173.2L334.9 173.2M334.9 173.2L364.5 173.2M364.5 173.2L394.2 173.2M394.2 173.2L423.8 173.2M423.8 173.2L453.4 173.2M453.4 173.2L483.0 173.2M483.0 173.2L512.6 173.2M512.6 173.2L542.2 173.2M542.2 173.2L571.9 173.2M571.9 173.2L601.5 173.2M260.9 198.8L290.5 198.8M290.5 198.8L320.1 198.8M320.1 198.8L349.7 198.8M349.7 198.8L379.3 198.8M379.3 198.8L409.0 198.8M409.0 198.8L438.6 198.8M438.6 198.8L468.2 198.8M468.2 198.8L497.8 198.8M497.8 198.8L527.4 198.8M527.4 198.8L557.1 198.8M557.1 198.8L586.7 198.8M275.7 224.5L305.3 224.5M305.3 224.5L334.9 224.5M334.9 224.5L364.5 224.5M364.5 224.5L394.2 224.5M394.2 224.5L423.8 224.5M423.8 224.5L453.4 224.5M453.4 224.5L483.0 224.5M483.0 224.5L512.6 224.5M512.6 224.5L542.2 224.5M542.2 224.5L571.9 224.5M571.9 224.5L601.5 224.5M260.9 250.1L290.5 250.1M290.5 250.1L320.1 250.1M320.1 250.1L349.7 250.1M349.7 250.1L379.3 250.1M379.3 250.1L409.0 250.1M409.0 250.1L438.6 250.1M438.6 250.1L468.2 250.1M468.2 250.1L497.8 250.1M497.8 250.1L527.4 250.1M527.4 250.1L557.1 250.1M557.1 250.1L586.7 250.1M275.7 275.8L305.3 275.8M305.3 275.8L334.9 275.8M334.9 275.8L364.5 275.8M364.5 275.8L394.2 275.8M394.2 275.8L423.8 275.8M423.8 275.8L453.4 275.8M453.4 275.8L483.0 275.8M483.0 275.8L512.6 275.8M512.6 275.8L542.2 275.8M542.2 275.8L571.9 275.8M571.9 275.8L601.5 275.8M260.9 301.4L290.5 301.4M290.5 301.4L320.1 301.4M320.1 301.4L349.7 301.4M349.7 301.4L379.3 301.4M379.3 301.4L409.0 301.4M409.0 301.4L438.6 301.4M438.6 301.4L468.2 301.4M468.2 301.4L497.8 301.4M497.8 301.4L527.4 301.4M527.4 301.4L557.1 301.4M557.1 301.4L586.7 301.4" stroke="#d6eaf3" stroke-width="0.70" fill="none"/><path d="M260.9 44.9L275.7 70.5M260.9 44.9L246.1 70.5M260.9 44.9L275.7 53.4M260.9 44.9L260.9 62.0M260.9 44.9L246.1 53.4M260.9 44.9L246.1 36.3M260.9 44.9L260.9 27.8M260.9 44.9L275.7 36.3M290.5 44.9L305.3 70.5M290.5 44.9L275.7 70.5M290.5 44.9L305.3 53.4M290.5 44.9L290.5 62.0M290.5 44.9L275.7 53.4M290.5 44.9L275.7 36.3M290.5 44.9L290.5 27.8M290.5 44.9L305.3 36.3M320.1 44.9L334.9 70.5M320.1 44.9L305.3 70.5M320.1 44.9L334.9 53.4M320.1 44.9L320.1 62.0M320.1 44.9L305.3 53.4M320.1 44.9L305.3 36.3M320.1 44.9L320.1 27.8M320.1 44.9L334.9 36.3M349.7 44.9L364.5 70.5M349.7 44.9L334.9 70.5M349.7 44.9L364.5 53.4M349.7 44.9L349.7 62.0M349.7 44.9L334.9 53.4M349.7 44.9L334.9 36.3M349.7 44.9L349.7 27.8M349.7 44.9L364.5 36.3M379.3 44.9L394.2 70.5M379.3 44.9L364.5 70.5M379.3 44.9L394.2 53.4M379.3 44.9L379.3 62.0M379.3 44.9L364.5 53.4M379.3 44.9L364.5 36.3M379.3 44.9L379.3 27.8M379.3 44.9L394.2 36.3M409.0 44.9L423.8 70.5M409.0 44.9L394.2 70.5M409.0 44.9L423.8 53.4M409.0 44.9L409.0 62.0M409.0 44.9L394.2 53.4M409.0 44.9L394.2 36.3M409.0 44.9L409.0 27.8M409.0 44.9L423.8 36.3M438.6 44.9L453.4 70.5M438.6 44.9L423.8 70.5M438.6 44.9L453.4 53.4M438.6 44.9L438.6 62.0M438.6 44.9L423.8 53.4M438.6 44.9L423.8 36.3M438.6 44.9L438.6 27.8M438.6 44.9L453.4 36.3M468.2 44.9L483.0 70.5M468.2 44.9L453.4 70.5M468.2 44.9L483.0 53.4M468.2 44.9L468.2 62.0M468.2 44.9L453.4 53.4M468.2 44.9L453.4 36.3M468.2 44.9L468.2 27.8M468.2 44.9L483.0 36.3M497.8 44.9L512.6 70.5M497.8 44.9L483.0 70.5M497.8 44.9L512.6 53.4M497.8 44.9L497.8 62.0M497.8 44.9L483.0 53.4M497.8 44.9L483.0 36.3M497.8 44.9L497.8 27.8M497.8 44.9L512.6 36.3M527.4 44.9L542.2 70.5M527.4 44.9L512.6 70.5M527.4 44.9L542.2 53.4M527.4 44.9L527.4 62.0M527.4 44.9L512.6 53.4M527.4 44.9L512.6 36.3M527.4 44.9L527.4 27.8M527.4 44.9L542.2 36.3M557.1 44.9L571.9 70.5M557.1 44.9L542.3 70.5M557.1 44.9L571.9 53.4M557.1 44.9L557.1 62.0M557.1 44.9L542.3 53.4M557.1 44.9L542.3 36.3M557.1 44.9L557.1 27.8M557.1 44.9L571.9 36.3M275.7 70.5L290.5 96.2M275.7 70.5L260.9 96.2M275.7 70.5L290.5 79.1M275.7 70.5L275.7 87.6M275.7 70.5L260.9 79.1M275.7 70.5L260.9 62.0M275.7 70.5L275.7 53.4M275.7 70.5L290.5 62.0M305.3 70.5L320.1 96.2M305.3 70.5L290.5 96.2M305.3 70.5L320.1 79.1M305.3 70.5L305.3 87.6M305.3 70.5L290.5 79.1M305.3 70.5L290.5 62.0M305.3 70.5L305.3 53.4M305.3 70.5L320.1 62.0M334.9 70.5L349.7 96.2M334.9 70.5L320.1 96.2M334.9 70.5L349.7 79.1M334.9 70.5L334.9 87.6M334.9 70.5L320.1 79.1M334.9 70.5L320.1 62.0M334.9 70.5L334.9 53.4M334.9 70.5L349.7 62.0M364.5 70.5L379.3 96.2M364.5 70.5L349.7 96.2M364.5 70.5L379.3 79.1M364.5 70.5L364.5 87.6M364.5 70.5L349.7 79.1M364.5 70.5L349.7 62.0M364.5 70.5L364.5 53.4M364.5 70.5L379.3 62.0M394.2 70.5L409.0 96.2M394.2 70.5L379.3 96.2M394.2 70.5L409.0 79.1M394.2 70.5L394.2 87.6M394.2 70.5L379.3 79.1M394.2 70.5L379.3 62.0M394.2 70.5L394.2 53.4M394.2 70.5L409.0 62.0M423.8 70.5L438.6 96.2M423.8 70.5L409.0 96.2M423.8 70.5L438.6 79.1M423.8 70.5L423.8 87.6M423.8 70.5L409.0 79.1M423.8 70.5L409.0 62.0M423.8 70.5L423.8 53.4M423.8 70.5L438.6 62.0M453.4 70.5L468.2 96.2M453.4 70.5L438.6 96.2M453.4 70.5L468.2 79.1M453.4 70.5L453.4 87.6M453.4 70.5L438.6 79.1M453.4 70.5L438.6 62.0M453.4 70.5L453.4 53.4M453.4 70.5L468.2 62.0M483.0 70.5L497.8 96.2M483.0 70.5L468.2 96.2M483.0 70.5L497.8 79.1M483.0 70.5L483.0 87.6M483.0 70.5L468.2 79.1M483.0 70.5L468.2 62.0M483.0 70.5L483.0 53.4M483.0 70.5L497.8 62.0M512.6 70.5L527.4 96.2M512.6 70.5L497.8 96.2M512.6 70.5L527.4 79.1M512.6 70.5L512.6 87.6M512.6 70.5L497.8 79.1M512.6 70.5L497.8 62.0M512.6 70.5L512.6 53.4M512.6 70.5L527.4 62.0M542.2 70.5L557.1 96.2M542.2 70.5L527.4 96.2M542.2 70.5L557.1 79.1M542.2 70.5L542.2 87.6M542.2 70.5L527.4 79.1M542.2 70.5L527.4 62.0M542.2 70.5L542.2 53.4M542.2 70.5L557.1 62.0M571.9 70.5L586.7 96.2M571.9 70.5L557.1 96.2M571.9 70.5L586.7 79.1M571.9 70.5L571.9 87.6M571.9 70.5L557.1 79.1M571.9 70.5L557.1 62.0M571.9 70.5L571.9 53.4M571.9 70.5L586.7 62.0M260.9 96.2L275.7 121.9M260.9 96.2L246.1 121.9M260.9 96.2L275.7 104.8M260.9 96.2L260.9 113.3M260.9 96.2L246.1 104.8M260.9 96.2L246.1 87.6M260.9 96.2L260.9 79.1M260.9 96.2L275.7 87.6M290.5 96.2L305.3 121.9M290.5 96.2L275.7 121.9M290.5 96.2L305.3 104.8M290.5 96.2L290.5 113.3M290.5 96.2L275.7 104.8M290.5 96.2L275.7 87.6M290.5 96.2L290.5 79.1M290.5 96.2L305.3 87.6M320.1 96.2L334.9 121.9M320.1 96.2L305.3 121.9M320.1 96.2L334.9 104.8M320.1 96.2L320.1 113.3M320.1 96.2L305.3 104.8M320.1 96.2L305.3 87.6M320.1 96.2L320.1 79.1M320.1 96.2L334.9 87.6M349.7 96.2L364.5 121.9M349.7 96.2L334.9 121.9M349.7 96.2L364.5 104.8M349.7 96.2L349.7 113.3M349.7 96.2L334.9 104.8M349.7 96.2L334.9 87.6M349.7 96.2L349.7 79.1M349.7 96.2L364.5 87.6M379.3 96.2L394.2 121.9M379.3 96.2L364.5 121.9M379.3 96.2L394.2 104.8M379.3 96.2L379.3 113.3M379.3 96.2L364.5 104.8M379.3 96.2L364.5 87.6M379.3 96.2L379.3 79.1M379.3 96.2L394.2 87.6M409.0 96.2L423.8 121.9M409.0 96.2L394.2 121.9M409.0 96.2L423.8 104.8M409.0 96.2L409.0 113.3M409.0 96.2L394.2 104.8M409.0 96.2L394.2 87.6M409.0 96.2L409.0 79.1M409.0 96.2L423.8 87.6M438.6 96.2L453.4 121.9M438.6 96.2L423.8 121.9M438.6 96.2L453.4 104.8M438.6 96.2L438.6 113.3M438.6 96.2L423.8 104.8M438.6 96.2L423.8 87.6M438.6 96.2L438.6 79.1M438.6 96.2L453.4 87.6M468.2 96.2L483.0 121.9M468.2 96.2L453.4 121.9M468.2 96.2L483.0 104.8M468.2 96.2L468.2 113.3M468.2 96.2L453.4 104.8M468.2 96.2L453.4 87.6M468.2 96.2L468.2 79.1M468.2 96.2L483.0 87.6M497.8 96.2L512.6 121.9M497.8 96.2L483.0 121.9M497.8 96.2L512.6 104.8M497.8 96.2L497.8 113.3M497.8 96.2L483.0 104.8M497.8 96.2L483.0 87.6M497.8 96.2L497.8 79.1M497.8 96.2L512.6 87.6M527.4 96.2L542.2 121.9M527.4 96.2L512.6 121.9M527.4 96.2L542.2 104.8M527.4 96.2L527.4 113.3M527.4 96.2L512.6 104.8M527.4 96.2L512.6 87.6M527.4 96.2L527.4 79.1M527.4 96.2L542.2 87.6M557.1 96.2L571.9 121.9M557.1 96.2L542.3 121.9M557.1 96.2L571.9 104.8M557.1 96.2L557.1 113.3M557.1 96.2L542.3 104.8M557.1 96.2L542.3 87.6M557.1 96.2L557.1 79.1M557.1 96.2L571.9 87.6M275.7 121.9L290.5 147.5M275.7 121.9L260.9 147.5M275.7 121.9L290.5 130.4M275.7 121.9L275.7 139.0M275.7 121.9L260.9 130.4M275.7 121.9L260.9 113.3M275.7 121.9L275.7 104.8M275.7 121.9L290.5 113.3M305.3 121.9L320.1 147.5M305.3 121.9L290.5 147.5M305.3 121.9L320.1 130.4M305.3 121.9L305.3 139.0M305.3 121.9L290.5 130.4M305.3 121.9L290.5 113.3M305.3 121.9L305.3 104.8M305.3 121.9L320.1 113.3M334.9 121.9L349.7 147.5M334.9 121.9L320.1 147.5M334.9 121.9L349.7 130.4M334.9 121.9L334.9 139.0M334.9 121.9L320.1 130.4M334.9 121.9L320.1 113.3M334.9 121.9L334.9 104.8M334.9 121.9L349.7 113.3M364.5 121.9L379.3 147.5M364.5 121.9L349.7 147.5M364.5 121.9L379.3 130.4M364.5 121.9L364.5 139.0M364.5 121.9L349.7 130.4M364.5 121.9L349.7 113.3M364.5 121.9L364.5 104.8M364.5 121.9L379.3 113.3M394.2 121.9L409.0 147.5M394.2 121.9L379.3 147.5M394.2 121.9L409.0 130.4M394.2 121.9L394.2 139.0M394.2 121.9L379.3 130.4M394.2 121.9L379.3 113.3M394.2 121.9L394.2 104.8M394.2 121.9L409.0 113.3M423.8 121.9L438.6 147.5M423.8 121.9L409.0 147.5M423.8 121.9L438.6 130.4M423.8 121.9L423.8 139.0M423.8 121.9L409.0 130.4M423.8 121.9L409.0 113.3M423.8 121.9L423.8 104.8M423.8 121.9L438.6 113.3M453.4 121.9L468.2 147.5M453.4 121.9L438.6 147.5M453.4 121.9L468.2 130.4M453.4 121.9L453.4 139.0M453.4 121.9L438.6 130.4M453.4 121.9L438.6 113.3M453.4 121.9L453.4 104.8M453.4 121.9L468.2 113.3M483.0 121.9L497.8 147.5M483.0 121.9L468.2 147.5M483.0 121.9L497.8 130.4M483.0 121.9L483.0 139.0M483.0 121.9L468.2 130.4M483.0 121.9L468.2 113.3M483.0 121.9L483.0 104.8M483.0 121.9L497.8 113.3M512.6 121.9L527.4 147.5M512.6 121.9L497.8 147.5M512.6 121.9L527.4 130.4M512.6 121.9L512.6 139.0M512.6 121.9L497.8 130.4M512.6 121.9L497.8 113.3M512.6 121.9L512.6 104.8M512.6 121.9L527.4 113.3M542.2 121.9L557.1 147.5M542.2 121.9L527.4 147.5M542.2 121.9L557.1 130.4M542.2 121.9L542.2 139.0M542.2 121.9L527.4 130.4M542.2 121.9L527.4 113.3M542.2 121.9L542.2 104.8M542.2 121.9L557.1 113.3M571.9 121.9L586.7 147.5M571.9 121.9L557.1 147.5M571.9 121.9L586.7 130.4M571.9 121.9L571.9 139.0M571.9 121.9L557.1 130.4M571.9 121.9L557.1 113.3M571.9 121.9L571.9 104.8M571.9 121.9L586.7 113.3M260.9 147.5L275.7 173.2M260.9 147.5L246.1 173.2M260.9 147.5L275.7 156.1M260.9 147.5L260.9 164.6M260.9 147.5L246.1 156.1M260.9 147.5L246.1 139.0M260.9 147.5L260.9 130.4M260.9 147.5L275.7 139.0M290.5 147.5L305.3 173.2M290.5 147.5L275.7 173.2M290.5 147.5L305.3 156.1M290.5 147.5L290.5 164.6M290.5 147.5L275.7 156.1M290.5 147.5L275.7 139.0M290.5 147.5L290.5 130.4M290.5 147.5L305.3 139.0M320.1 147.5L334.9 173.2M320.1 147.5L305.3 173.2M320.1 147.5L334.9 156.1M320.1 147.5L320.1 164.6M320.1 147.5L305.3 156.1M320.1 147.5L305.3 139.0M320.1 147.5L320.1 130.4M320.1 147.5L334.9 139.0M349.7 147.5L364.5 173.2M349.7 147.5L334.9 173.2M349.7 147.5L364.5 156.1M349.7 147.5L349.7 164.6M349.7 147.5L334.9 156.1M349.7 147.5L334.9 139.0M349.7 147.5L349.7 130.4M349.7 147.5L364.5 139.0M379.3 147.5L394.2 173.2M379.3 147.5L364.5 173.2M379.3 147.5L394.2 156.1M379.3 147.5L379.3 164.6M379.3 147.5L364.5 156.1M379.3 147.5L364.5 139.0M379.3 147.5L379.3 130.4M379.3 147.5L394.2 139.0M409.0 147.5L423.8 173.2M409.0 147.5L394.2 173.2M409.0 147.5L423.8 156.1M409.0 147.5L409.0 164.6M409.0 147.5L394.2 156.1M409.0 147.5L394.2 139.0M409.0 147.5L409.0 130.4M409.0 147.5L423.8 139.0M438.6 147.5L453.4 173.2M438.6 147.5L423.8 173.2M438.6 147.5L453.4 156.1M438.6 147.5L438.6 164.6M438.6 147.5L423.8 156.1M438.6 147.5L423.8 139.0M438.6 147.5L438.6 130.4M438.6 147.5L453.4 139.0M468.2 147.5L483.0 173.2M468.2 147.5L453.4 173.2M468.2 147.5L483.0 156.1M468.2 147.5L468.2 164.6M468.2 147.5L453.4 156.1M468.2 147.5L453.4 139.0M468.2 147.5L468.2 130.4M468.2 147.5L483.0 139.0M497.8 147.5L512.6 173.2M497.8 147.5L483.0 173.2M497.8 147.5L512.6 156.1M497.8 147.5L497.8 164.6M497.8 147.5L483.0 156.1M497.8 147.5L483.0 139.0M497.8 147.5L497.8 130.4M497.8 147.5L512.6 139.0M527.4 147.5L542.2 173.2M527.4 147.5L512.6 173.2M527.4 147.5L542.2 156.1M527.4 147.5L527.4 164.6M527.4 147.5L512.6 156.1M527.4 147.5L512.6 139.0M527.4 147.5L527.4 130.4M527.4 147.5L542.2 139.0M557.1 147.5L571.9 173.2M557.1 147.5L542.3 173.2M557.1 147.5L571.9 156.1M557.1 147.5L557.1 164.6M557.1 147.5L542.3 156.1M557.1 147.5L542.3 139.0M557.1 147.5L557.1 130.4M557.1 147.5L571.9 139.0M275.7 173.2L290.5 198.8M275.7 173.2L260.9 198.8M275.7 173.2L290.5 181.7M275.7 173.2L275.7 190.3M275.7 173.2L260.9 181.7M275.7 173.2L260.9 164.6M275.7 173.2L275.7 156.1M275.7 173.2L290.5 164.6M305.3 173.2L320.1 198.8M305.3 173.2L290.5 198.8M305.3 173.2L320.1 181.7M305.3 173.2L305.3 190.3M305.3 173.2L290.5 181.7M305.3 173.2L290.5 164.6M305.3 173.2L305.3 156.1M305.3 173.2L320.1 164.6M334.9 173.2L349.7 198.8M334.9 173.2L320.1 198.8M334.9 173.2L349.7 181.7M334.9 173.2L334.9 190.3M334.9 173.2L320.1 181.7M334.9 173.2L320.1 164.6M334.9 173.2L334.9 156.1M334.9 173.2L349.7 164.6M364.5 173.2L379.3 198.8M364.5 173.2L349.7 198.8M364.5 173.2L379.3 181.7M364.5 173.2L364.5 190.3M364.5 173.2L349.7 181.7M364.5 173.2L349.7 164.6M364.5 173.2L364.5 156.1M364.5 173.2L379.3 164.6M394.2 173.2L409.0 198.8M394.2 173.2L379.3 198.8M394.2 173.2L409.0 181.7M394.2 173.2L394.2 190.3M394.2 173.2L379.3 181.7M394.2 173.2L379.3 164.6M394.2 173.2L394.2 156.1M394.2 173.2L409.0 164.6M423.8 173.2L438.6 198.8M423.8 173.2L409.0 198.8M423.8 173.2L438.6 181.7M423.8 173.2L423.8 190.3M423.8 173.2L409.0 181.7M423.8 173.2L409.0 164.6M423.8 173.2L423.8 156.1M423.8 173.2L438.6 164.6M453.4 173.2L468.2 198.8M453.4 173.2L438.6 198.8M453.4 173.2L468.2 181.7M453.4 173.2L453.4 190.3M453.4 173.2L438.6 181.7M453.4 173.2L438.6 164.6M453.4 173.2L453.4 156.1M453.4 173.2L468.2 164.6M483.0 173.2L497.8 198.8M483.0 173.2L468.2 198.8M483.0 173.2L497.8 181.7M483.0 173.2L483.0 190.3M483.0 173.2L468.2 181.7M483.0 173.2L468.2 164.6M483.0 173.2L483.0 156.1M483.0 173.2L497.8 164.6M512.6 173.2L527.4 198.8M512.6 173.2L497.8 198.8M512.6 173.2L527.4 181.7M512.6 173.2L512.6 190.3M512.6 173.2L497.8 181.7M512.6 173.2L497.8 164.6M512.6 173.2L512.6 156.1M512.6 173.2L527.4 164.6M542.2 173.2L557.1 198.8M542.2 173.2L527.4 198.8M542.2 173.2L557.1 181.7M542.2 173.2L542.2 190.3M542.2 173.2L527.4 181.7M542.2 173.2L527.4 164.6M542.2 173.2L542.2 156.1M542.2 173.2L557.1 164.6M571.9 173.2L586.7 198.8M571.9 173.2L557.1 198.8M571.9 173.2L586.7 181.7M571.9 173.2L571.9 190.3M571.9 173.2L557.1 181.7M571.9 173.2L557.1 164.6M571.9 173.2L571.9 156.1M571.9 173.2L586.7 164.6M260.9 198.8L275.7 224.5M260.9 198.8L246.1 224.5M260.9 198.8L275.7 207.4M260.9 198.8L260.9 215.9M260.9 198.8L246.1 207.4M260.9 198.8L246.1 190.3M260.9 198.8L260.9 181.7M260.9 198.8L275.7 190.3M290.5 198.8L305.3 224.5M290.5 198.8L275.7 224.5M290.5 198.8L305.3 207.4M290.5 198.8L290.5 215.9M290.5 198.8L275.7 207.4M290.5 198.8L275.7 190.3M290.5 198.8L290.5 181.7M290.5 198.8L305.3 190.3M320.1 198.8L334.9 224.5M320.1 198.8L305.3 224.5M320.1 198.8L334.9 207.4M320.1 198.8L320.1 215.9M320.1 198.8L305.3 207.4M320.1 198.8L305.3 190.3M320.1 198.8L320.1 181.7M320.1 198.8L334.9 190.3M349.7 198.8L364.5 224.5M349.7 198.8L334.9 224.5M349.7 198.8L364.5 207.4M349.7 198.8L349.7 215.9M349.7 198.8L334.9 207.4M349.7 198.8L334.9 190.3M349.7 198.8L349.7 181.7M349.7 198.8L364.5 190.3M379.3 198.8L394.2 224.5M379.3 198.8L364.5 224.5M379.3 198.8L394.2 207.4M379.3 198.8L379.3 215.9M379.3 198.8L364.5 207.4M379.3 198.8L364.5 190.3M379.3 198.8L379.3 181.7M379.3 198.8L394.2 190.3M409.0 198.8L423.8 224.5M409.0 198.8L394.2 224.5M409.0 198.8L423.8 207.4M409.0 198.8L409.0 215.9M409.0 198.8L394.2 207.4M409.0 198.8L394.2 190.3M409.0 198.8L409.0 181.7M409.0 198.8L423.8 190.3M438.6 198.8L453.4 224.5M438.6 198.8L423.8 224.5M438.6 198.8L453.4 207.4M438.6 198.8L438.6 215.9M438.6 198.8L423.8 207.4M438.6 198.8L423.8 190.3M438.6 198.8L438.6 181.7M438.6 198.8L453.4 190.3M468.2 198.8L483.0 224.5M468.2 198.8L453.4 224.5M468.2 198.8L483.0 207.4M468.2 198.8L468.2 215.9M468.2 198.8L453.4 207.4M468.2 198.8L453.4 190.3M468.2 198.8L468.2 181.7M468.2 198.8L483.0 190.3M497.8 198.8L512.6 224.5M497.8 198.8L483.0 224.5M497.8 198.8L512.6 207.4M497.8 198.8L497.8 215.9M497.8 198.8L483.0 207.4M497.8 198.8L483.0 190.3M497.8 198.8L497.8 181.7M497.8 198.8L512.6 190.3M527.4 198.8L542.2 224.5M527.4 198.8L512.6 224.5M527.4 198.8L542.2 207.4M527.4 198.8L527.4 215.9M527.4 198.8L512.6 207.4M527.4 198.8L512.6 190.3M527.4 198.8L527.4 181.7M527.4 198.8L542.2 190.3M557.1 198.8L571.9 224.5M557.1 198.8L542.3 224.5M557.1 198.8L571.9 207.4M557.1 198.8L557.1 215.9M557.1 198.8L542.3 207.4M557.1 198.8L542.3 190.3M557.1 198.8L557.1 181.7M557.1 198.8L571.9 190.3M275.7 224.5L290.5 250.1M275.7 224.5L260.9 250.1M275.7 224.5L290.5 233.0M275.7 224.5L275.7 241.6M275.7 224.5L260.9 233.0M275.7 224.5L260.9 215.9M275.7 224.5L275.7 207.4M275.7 224.5L290.5 215.9M305.3 224.5L320.1 250.1M305.3 224.5L290.5 250.1M305.3 224.5L320.1 233.0M305.3 224.5L305.3 241.6M305.3 224.5L290.5 233.0M305.3 224.5L290.5 215.9M305.3 224.5L305.3 207.4M305.3 224.5L320.1 215.9M334.9 224.5L349.7 250.1M334.9 224.5L320.1 250.1M334.9 224.5L349.7 233.0M334.9 224.5L334.9 241.6M334.9 224.5L320.1 233.0M334.9 224.5L320.1 215.9M334.9 224.5L334.9 207.4M334.9 224.5L349.7 215.9M364.5 224.5L379.3 250.1M364.5 224.5L349.7 250.1M364.5 224.5L379.3 233.0M364.5 224.5L364.5 241.6M364.5 224.5L349.7 233.0M364.5 224.5L349.7 215.9M364.5 224.5L364.5 207.4M364.5 224.5L379.3 215.9M394.2 224.5L409.0 250.1M394.2 224.5L379.3 250.1M394.2 224.5L409.0 233.0M394.2 224.5L394.2 241.6M394.2 224.5L379.3 233.0M394.2 224.5L379.3 215.9M394.2 224.5L394.2 207.4M394.2 224.5L409.0 215.9M423.8 224.5L438.6 250.1M423.8 224.5L409.0 250.1M423.8 224.5L438.6 233.0M423.8 224.5L423.8 241.6M423.8 224.5L409.0 233.0M423.8 224.5L409.0 215.9M423.8 224.5L423.8 207.4M423.8 224.5L438.6 215.9M453.4 224.5L468.2 250.1M453.4 224.5L438.6 250.1M453.4 224.5L468.2 233.0M453.4 224.5L453.4 241.6M453.4 224.5L438.6 233.0M453.4 224.5L438.6 215.9M453.4 224.5L453.4 207.4M453.4 224.5L468.2 215.9M483.0 224.5L497.8 250.1M483.0 224.5L468.2 250.1M483.0 224.5L497.8 233.0M483.0 224.5L483.0 241.6M483.0 224.5L468.2 233.0M483.0 224.5L468.2 215.9M483.0 224.5L483.0 207.4M483.0 224.5L497.8 215.9M512.6 224.5L527.4 250.1M512.6 224.5L497.8 250.1M512.6 224.5L527.4 233.0M512.6 224.5L512.6 241.6M512.6 224.5L497.8 233.0M512.6 224.5L497.8 215.9M512.6 224.5L512.6 207.4M512.6 224.5L527.4 215.9M542.2 224.5L557.1 250.1M542.2 224.5L527.4 250.1M542.2 224.5L557.1 233.0M542.2 224.5L542.2 241.6M542.2 224.5L527.4 233.0M542.2 224.5L527.4 215.9M542.2 224.5L542.2 207.4M542.2 224.5L557.1 215.9M571.9 224.5L586.7 250.1M571.9 224.5L557.1 250.1M571.9 224.5L586.7 233.0M571.9 224.5L571.9 241.6M571.9 224.5L557.1 233.0M571.9 224.5L557.1 215.9M571.9 224.5L571.9 207.4M571.9 224.5L586.7 215.9M260.9 250.1L275.7 275.8M260.9 250.1L246.1 275.8M260.9 250.1L275.7 258.7M260.9 250.1L260.9 267.2M260.9 250.1L246.1 258.7M260.9 250.1L246.1 241.6M260.9 250.1L260.9 233.0M260.9 250.1L275.7 241.6M290.5 250.1L305.3 275.8M290.5 250.1L275.7 275.8M290.5 250.1L305.3 258.7M290.5 250.1L290.5 267.2M290.5 250.1L275.7 258.7M290.5 250.1L275.7 241.6M290.5 250.1L290.5 233.0M290.5 250.1L305.3 241.6M320.1 250.1L334.9 275.8M320.1 250.1L305.3 275.8M320.1 250.1L334.9 258.7M320.1 250.1L320.1 267.2M320.1 250.1L305.3 258.7M320.1 250.1L305.3 241.6M320.1 250.1L320.1 233.0M320.1 250.1L334.9 241.6M349.7 250.1L364.5 275.8M349.7 250.1L334.9 275.8M349.7 250.1L364.5 258.7M349.7 250.1L349.7 267.2M349.7 250.1L334.9 258.7M349.7 250.1L334.9 241.6M349.7 250.1L349.7 233.0M349.7 250.1L364.5 241.6M379.3 250.1L394.2 275.8M379.3 250.1L364.5 275.8M379.3 250.1L394.2 258.7M379.3 250.1L379.3 267.2M379.3 250.1L364.5 258.7M379.3 250.1L364.5 241.6M379.3 250.1L379.3 233.0M379.3 250.1L394.2 241.6M409.0 250.1L423.8 275.8M409.0 250.1L394.2 275.8M409.0 250.1L423.8 258.7M409.0 250.1L409.0 267.2M409.0 250.1L394.2 258.7M409.0 250.1L394.2 241.6M409.0 250.1L409.0 233.0M409.0 250.1L423.8 241.6M438.6 250.1L453.4 275.8M438.6 250.1L423.8 275.8M438.6 250.1L453.4 258.7M438.6 250.1L438.6 267.2M438.6 250.1L423.8 258.7M438.6 250.1L423.8 241.6M438.6 250.1L438.6 233.0M438.6 250.1L453.4 241.6M468.2 250.1L483.0 275.8M468.2 250.1L453.4 275.8M468.2 250.1L483.0 258.7M468.2 250.1L468.2 267.2M468.2 250.1L453.4 258.7M468.2 250.1L453.4 241.6M468.2 250.1L468.2 233.0M468.2 250.1L483.0 241.6M497.8 250.1L512.6 275.8M497.8 250.1L483.0 275.8M497.8 250.1L512.6 258.7M497.8 250.1L497.8 267.2M497.8 250.1L483.0 258.7M497.8 250.1L483.0 241.6M497.8 250.1L497.8 233.0M497.8 250.1L512.6 241.6M527.4 250.1L542.2 275.8M527.4 250.1L512.6 275.8M527.4 250.1L542.2 258.7M527.4 250.1L527.4 267.2M527.4 250.1L512.6 258.7M527.4 250.1L512.6 241.6M527.4 250.1L527.4 233.0M527.4 250.1L542.2 241.6M557.1 250.1L571.9 275.8M557.1 250.1L542.3 275.8M557.1 250.1L571.9 258.7M557.1 250.1L557.1 267.2M557.1 250.1L542.3 258.7M557.1 250.1L542.3 241.6M557.1 250.1L557.1 233.0M557.1 250.1L571.9 241.6M275.7 275.8L290.5 301.4M275.7 275.8L260.9 301.4M275.7 275.8L290.5 284.3M275.7 275.8L275.7 292.9M275.7 275.8L260.9 284.3M275.7 275.8L260.9 267.2M275.7 275.8L275.7 258.7M275.7 275.8L290.5 267.2M305.3 275.8L320.1 301.4M305.3 275.8L290.5 301.4M305.3 275.8L320.1 284.3M305.3 275.8L305.3 292.9M305.3 275.8L290.5 284.3M305.3 275.8L290.5 267.2M305.3 275.8L305.3 258.7M305.3 275.8L320.1 267.2M334.9 275.8L349.7 301.4M334.9 275.8L320.1 301.4M334.9 275.8L349.7 284.3M334.9 275.8L334.9 292.9M334.9 275.8L320.1 284.3M334.9 275.8L320.1 267.2M334.9 275.8L334.9 258.7M334.9 275.8L349.7 267.2M364.5 275.8L379.3 301.4M364.5 275.8L349.7 301.4M364.5 275.8L379.3 284.3M364.5 275.8L364.5 292.9M364.5 275.8L349.7 284.3M364.5 275.8L349.7 267.2M364.5 275.8L364.5 258.7M364.5 275.8L379.3 267.2M394.2 275.8L409.0 301.4M394.2 275.8L379.3 301.4M394.2 275.8L409.0 284.3M394.2 275.8L394.2 292.9M394.2 275.8L379.3 284.3M394.2 275.8L379.3 267.2M394.2 275.8L394.2 258.7M394.2 275.8L409.0 267.2M423.8 275.8L438.6 301.4M423.8 275.8L409.0 301.4M423.8 275.8L438.6 284.3M423.8 275.8L423.8 292.9M423.8 275.8L409.0 284.3M423.8 275.8L409.0 267.2M423.8 275.8L423.8 258.7M423.8 275.8L438.6 267.2M453.4 275.8L468.2 301.4M453.4 275.8L438.6 301.4M453.4 275.8L468.2 284.3M453.4 275.8L453.4 292.9M453.4 275.8L438.6 284.3M453.4 275.8L438.6 267.2M453.4 275.8L453.4 258.7M453.4 275.8L468.2 267.2M483.0 275.8L497.8 301.4M483.0 275.8L468.2 301.4M483.0 275.8L497.8 284.3M483.0 275.8L483.0 292.9M483.0 275.8L468.2 284.3M483.0 275.8L468.2 267.2M483.0 275.8L483.0 258.7M483.0 275.8L497.8 267.2M512.6 275.8L527.4 301.4M512.6 275.8L497.8 301.4M512.6 275.8L527.4 284.3M512.6 275.8L512.6 292.9M512.6 275.8L497.8 284.3M512.6 275.8L497.8 267.2M512.6 275.8L512.6 258.7M512.6 275.8L527.4 267.2M542.2 275.8L557.1 301.4M542.2 275.8L527.4 301.4M542.2 275.8L557.1 284.3M542.2 275.8L542.2 292.9M542.2 275.8L527.4 284.3M542.2 275.8L527.4 267.2M542.2 275.8L542.2 258.7M542.2 275.8L557.1 267.2M571.9 275.8L586.7 301.4M571.9 275.8L557.1 301.4M571.9 275.8L586.7 284.3M571.9 275.8L571.9 292.9M571.9 275.8L557.1 284.3M571.9 275.8L557.1 267.2M571.9 275.8L571.9 258.7M571.9 275.8L586.7 267.2M260.9 301.4L275.7 327.1M260.9 301.4L246.1 327.1M260.9 301.4L275.7 310.0M260.9 301.4L260.9 318.5M260.9 301.4L246.1 310.0M260.9 301.4L246.1 292.9M260.9 301.4L260.9 284.3M260.9 301.4L275.7 292.9M290.5 301.4L305.3 327.1M290.5 301.4L275.7 327.1M290.5 301.4L305.3 310.0M290.5 301.4L290.5 318.5M290.5 301.4L275.7 310.0M290.5 301.4L275.7 292.9M290.5 301.4L290.5 284.3M290.5 301.4L305.3 292.9M320.1 301.4L334.9 327.1M320.1 301.4L305.3 327.1M320.1 301.4L334.9 310.0M320.1 301.4L320.1 318.5M320.1 301.4L305.3 310.0M320.1 301.4L305.3 292.9M320.1 301.4L320.1 284.3M320.1 301.4L334.9 292.9M349.7 301.4L364.5 327.1M349.7 301.4L334.9 327.1M349.7 301.4L364.5 310.0M349.7 301.4L349.7 318.5M349.7 301.4L334.9 310.0M349.7 301.4L334.9 292.9M349.7 301.4L349.7 284.3M349.7 301.4L364.5 292.9M379.3 301.4L394.2 327.1M379.3 301.4L364.5 327.1M379.3 301.4L394.2 310.0M379.3 301.4L379.3 318.5M379.3 301.4L364.5 310.0M379.3 301.4L364.5 292.9M379.3 301.4L379.3 284.3M379.3 301.4L394.2 292.9M409.0 301.4L423.8 327.1M409.0 301.4L394.2 327.1M409.0 301.4L423.8 310.0M409.0 301.4L409.0 318.5M409.0 301.4L394.2 310.0M409.0 301.4L394.2 292.9M409.0 301.4L409.0 284.3M409.0 301.4L423.8 292.9M438.6 301.4L453.4 327.1M438.6 301.4L423.8 327.1M438.6 301.4L453.4 310.0M438.6 301.4L438.6 318.5M438.6 301.4L423.8 310.0M438.6 301.4L423.8 292.9M438.6 301.4L438.6 284.3M438.6 301.4L453.4 292.9M468.2 301.4L483.0 327.1M468.2 301.4L453.4 327.1M468.2 301.4L483.0 310.0M468.2 301.4L468.2 318.5M468.2 301.4L453.4 310.0M468.2 301.4L453.4 292.9M468.2 301.4L468.2 284.3M468.2 301.4L483.0 292.9M497.8 301.4L512.6 327.1M497.8 301.4L483.0 327.1M497.8 301.4L512.6 310.0M497.8 301.4L497.8 318.5M497.8 301.4L483.0 310.0M497.8 301.4L483.0 292.9M497.8 301.4L497.8 284.3M497.8 301.4L512.6 292.9M527.4 301.4L542.2 327.1M527.4 301.4L512.6 327.1M527.4 301.4L542.2 310.0M527.4 301.4L527.4 318.5M527.4 301.4L512.6 310.0M527.4 301.4L512.6 292.9M527.4 301.4L527.4 284.3M527.4 301.4L542.2 292.9M557.1 301.4L571.9 327.1M557.1 301.4L542.3 327.1M557.1 301.4L571.9 310.0M557.1 301.4L557.1 318.5M557.1 301.4L542.3 310.0M557.1 301.4L542.3 292.9M557.1 301.4L557.1 284.3M557.1 301.4L571.9 292.9" stroke="#b9dbea" stroke-width="0.70" fill="none"/></svg><svg style="position:absolute;overflow:hidden;left:314.30px;top:84.00px" width="186.40" height="176.50" viewBox="314.30 84.00 186.40 176.50"><rect x="314.30" y="84.00" width="186.40" height="176.50" fill="#cbe6f1"/><path d="M275.7 36.3L275.7 53.4M305.3 36.3L305.3 53.4M334.9 36.3L334.9 53.4M364.5 36.3L364.5 53.4M394.2 36.3L394.2 53.4M423.8 36.3L423.8 53.4M453.4 36.3L453.4 53.4M483.0 36.3L483.0 53.4M512.6 36.3L512.6 53.4M542.2 36.3L542.2 53.4M571.9 36.3L571.9 53.4M290.5 62.0L290.5 79.1M320.1 62.0L320.1 79.1M349.7 62.0L349.7 79.1M379.3 62.0L379.3 79.1M409.0 62.0L409.0 79.1M438.6 62.0L438.6 79.1M468.2 62.0L468.2 79.1M497.8 62.0L497.8 79.1M527.4 62.0L527.4 79.1M557.1 62.0L557.1 79.1M586.7 62.0L586.7 79.1M275.7 87.6L275.7 104.8M305.3 87.6L305.3 104.8M334.9 87.6L334.9 104.8M364.5 87.6L364.5 104.8M394.2 87.6L394.2 104.8M423.8 87.6L423.8 104.8M453.4 87.6L453.4 104.8M483.0 87.6L483.0 104.8M512.6 87.6L512.6 104.8M542.2 87.6L542.2 104.8M571.9 87.6L571.9 104.8M290.5 113.3L290.5 130.4M320.1 113.3L320.1 130.4M349.7 113.3L349.7 130.4M379.3 113.3L379.3 130.4M409.0 113.3L409.0 130.4M438.6 113.3L438.6 130.4M468.2 113.3L468.2 130.4M497.8 113.3L497.8 130.4M527.4 113.3L527.4 130.4M557.1 113.3L557.1 130.4M586.7 113.3L586.7 130.4M275.7 139.0L275.7 156.1M305.3 139.0L305.3 156.1M334.9 139.0L334.9 156.1M364.5 139.0L364.5 156.1M394.2 139.0L394.2 156.1M423.8 139.0L423.8 156.1M453.4 139.0L453.4 156.1M483.0 139.0L483.0 156.1M512.6 139.0L512.6 156.1M542.2 139.0L542.2 156.1M571.9 139.0L571.9 156.1M290.5 164.6L290.5 181.7M320.1 164.6L320.1 181.7M349.7 164.6L349.7 181.7M379.3 164.6L379.3 181.7M409.0 164.6L409.0 181.7M438.6 164.6L438.6 181.7M468.2 164.6L468.2 181.7M497.8 164.6L497.8 181.7M527.4 164.6L527.4 181.7M557.1 164.6L557.1 181.7M586.7 164.6L586.7 181.7M275.7 190.3L275.7 207.4M305.3 190.3L305.3 207.4M334.9 190.3L334.9 207.4M364.5 190.3L364.5 207.4M394.2 190.3L394.2 207.4M423.8 190.3L423.8 207.4M453.4 190.3L453.4 207.4M483.0 190.3L483.0 207.4M512.6 190.3L512.6 207.4M542.2 190.3L542.2 207.4M571.9 190.3L571.9 207.4M290.5 215.9L290.5 233.0M320.1 215.9L320.1 233.0M349.7 215.9L349.7 233.0M379.3 215.9L379.3 233.0M409.0 215.9L409.0 233.0M438.6 215.9L438.6 233.0M468.2 215.9L468.2 233.0M497.8 215.9L497.8 233.0M527.4 215.9L527.4 233.0M557.1 215.9L557.1 233.0M586.7 215.9L586.7 233.0M275.7 241.6L275.7 258.7M305.3 241.6L305.3 258.7M334.9 241.6L334.9 258.7M364.5 241.6L364.5 258.7M394.2 241.6L394.2 258.7M423.8 241.6L423.8 258.7M453.4 241.6L453.4 258.7M483.0 241.6L483.0 258.7M512.6 241.6L512.6 258.7M542.2 241.6L542.2 258.7M571.9 241.6L571.9 258.7M290.5 267.2L290.5 284.3M320.1 267.2L320.1 284.3M349.7 267.2L349.7 284.3M379.3 267.2L379.3 284.3M409.0 267.2L409.0 284.3M438.6 267.2L438.6 284.3M468.2 267.2L468.2 284.3M497.8 267.2L497.8 284.3M527.4 267.2L527.4 284.3M557.1 267.2L557.1 284.3M586.7 267.2L586.7 284.3M275.7 292.9L275.7 310.0M305.3 292.9L305.3 310.0M334.9 292.9L334.9 310.0M364.5 292.9L364.5 310.0M394.2 292.9L394.2 310.0M423.8 292.9L423.8 310.0M453.4 292.9L453.4 310.0M483.0 292.9L483.0 310.0M512.6 292.9L512.6 310.0M542.2 292.9L542.2 310.0M571.9 292.9L571.9 310.0" stroke="#86bfd9" stroke-width="0.60" fill="none" stroke-opacity="0.400"/><path d="M260.9 44.9L290.5 44.9M290.5 44.9L320.1 44.9M320.1 44.9L349.7 44.9M349.7 44.9L379.3 44.9M379.3 44.9L409.0 44.9M409.0 44.9L438.6 44.9M438.6 44.9L468.2 44.9M468.2 44.9L497.8 44.9M497.8 44.9L527.4 44.9M527.4 44.9L557.1 44.9M557.1 44.9L586.7 44.9M275.7 70.5L305.3 70.5M305.3 70.5L334.9 70.5M334.9 70.5L364.5 70.5M364.5 70.5L394.2 70.5M394.2 70.5L423.8 70.5M423.8 70.5L453.4 70.5M453.4 70.5L483.0 70.5M483.0 70.5L512.6 70.5M512.6 70.5L542.2 70.5M542.2 70.5L571.9 70.5M571.9 70.5L601.5 70.5M260.9 96.2L290.5 96.2M290.5 96.2L320.1 96.2M320.1 96.2L349.7 96.2M349.7 96.2L379.3 96.2M379.3 96.2L409.0 96.2M409.0 96.2L438.6 96.2M438.6 96.2L468.2 96.2M468.2 96.2L497.8 96.2M497.8 96.2L527.4 96.2M527.4 96.2L557.1 96.2M557.1 96.2L586.7 96.2M275.7 121.9L305.3 121.9M305.3 121.9L334.9 121.9M334.9 121.9L364.5 121.9M364.5 121.9L394.2 121.9M394.2 121.9L423.8 121.9M423.8 121.9L453.4 121.9M453.4 121.9L483.0 121.9M483.0 121.9L512.6 121.9M512.6 121.9L542.2 121.9M542.2 121.9L571.9 121.9M571.9 121.9L601.5 121.9M260.9 147.5L290.5 147.5M290.5 147.5L320.1 147.5M320.1 147.5L349.7 147.5M349.7 147.5L379.3 147.5M379.3 147.5L409.0 147.5M409.0 147.5L438.6 147.5M438.6 147.5L468.2 147.5M468.2 147.5L497.8 147.5M497.8 147.5L527.4 147.5M527.4 147.5L557.1 147.5M557.1 147.5L586.7 147.5M275.7 173.2L305.3 173.2M305.3 173.2L334.9 173.2M334.9 173.2L364.5 173.2M364.5 173.2L394.2 173.2M394.2 173.2L423.8 173.2M423.8 173.2L453.4 173.2M453.4 173.2L483.0 173.2M483.0 173.2L512.6 173.2M512.6 173.2L542.2 173.2M542.2 173.2L571.9 173.2M571.9 173.2L601.5 173.2M260.9 198.8L290.5 198.8M290.5 198.8L320.1 198.8M320.1 198.8L349.7 198.8M349.7 198.8L379.3 198.8M379.3 198.8L409.0 198.8M409.0 198.8L438.6 198.8M438.6 198.8L468.2 198.8M468.2 198.8L497.8 198.8M497.8 198.8L527.4 198.8M527.4 198.8L557.1 198.8M557.1 198.8L586.7 198.8M275.7 224.5L305.3 224.5M305.3 224.5L334.9 224.5M334.9 224.5L364.5 224.5M364.5 224.5L394.2 224.5M394.2 224.5L423.8 224.5M423.8 224.5L453.4 224.5M453.4 224.5L483.0 224.5M483.0 224.5L512.6 224.5M512.6 224.5L542.2 224.5M542.2 224.5L571.9 224.5M571.9 224.5L601.5 224.5M260.9 250.1L290.5 250.1M290.5 250.1L320.1 250.1M320.1 250.1L349.7 250.1M349.7 250.1L379.3 250.1M379.3 250.1L409.0 250.1M409.0 250.1L438.6 250.1M438.6 250.1L468.2 250.1M468.2 250.1L497.8 250.1M497.8 250.1L527.4 250.1M527.4 250.1L557.1 250.1M557.1 250.1L586.7 250.1M275.7 275.8L305.3 275.8M305.3 275.8L334.9 275.8M334.9 275.8L364.5 275.8M364.5 275.8L394.2 275.8M394.2 275.8L423.8 275.8M423.8 275.8L453.4 275.8M453.4 275.8L483.0 275.8M483.0 275.8L512.6 275.8M512.6 275.8L542.2 275.8M542.2 275.8L571.9 275.8M571.9 275.8L601.5 275.8M260.9 301.4L290.5 301.4M290.5 301.4L320.1 301.4M320.1 301.4L349.7 301.4M349.7 301.4L379.3 301.4M379.3 301.4L409.0 301.4M409.0 301.4L438.6 301.4M438.6 301.4L468.2 301.4M468.2 301.4L497.8 301.4M497.8 301.4L527.4 301.4M527.4 301.4L557.1 301.4M557.1 301.4L586.7 301.4" stroke="#86bfd9" stroke-width="0.60" fill="none"/><path d="M260.9 44.9L275.7 70.5M260.9 44.9L246.1 70.5M260.9 44.9L275.7 53.4M260.9 44.9L260.9 62.0M260.9 44.9L246.1 53.4M260.9 44.9L246.1 36.3M260.9 44.9L260.9 27.8M260.9 44.9L275.7 36.3M290.5 44.9L305.3 70.5M290.5 44.9L275.7 70.5M290.5 44.9L305.3 53.4M290.5 44.9L290.5 62.0M290.5 44.9L275.7 53.4M290.5 44.9L275.7 36.3M290.5 44.9L290.5 27.8M290.5 44.9L305.3 36.3M320.1 44.9L334.9 70.5M320.1 44.9L305.3 70.5M320.1 44.9L334.9 53.4M320.1 44.9L320.1 62.0M320.1 44.9L305.3 53.4M320.1 44.9L305.3 36.3M320.1 44.9L320.1 27.8M320.1 44.9L334.9 36.3M349.7 44.9L364.5 70.5M349.7 44.9L334.9 70.5M349.7 44.9L364.5 53.4M349.7 44.9L349.7 62.0M349.7 44.9L334.9 53.4M349.7 44.9L334.9 36.3M349.7 44.9L349.7 27.8M349.7 44.9L364.5 36.3M379.3 44.9L394.2 70.5M379.3 44.9L364.5 70.5M379.3 44.9L394.2 53.4M379.3 44.9L379.3 62.0M379.3 44.9L364.5 53.4M379.3 44.9L364.5 36.3M379.3 44.9L379.3 27.8M379.3 44.9L394.2 36.3M409.0 44.9L423.8 70.5M409.0 44.9L394.2 70.5M409.0 44.9L423.8 53.4M409.0 44.9L409.0 62.0M409.0 44.9L394.2 53.4M409.0 44.9L394.2 36.3M409.0 44.9L409.0 27.8M409.0 44.9L423.8 36.3M438.6 44.9L453.4 70.5M438.6 44.9L423.8 70.5M438.6 44.9L453.4 53.4M438.6 44.9L438.6 62.0M438.6 44.9L423.8 53.4M438.6 44.9L423.8 36.3M438.6 44.9L438.6 27.8M438.6 44.9L453.4 36.3M468.2 44.9L483.0 70.5M468.2 44.9L453.4 70.5M468.2 44.9L483.0 53.4M468.2 44.9L468.2 62.0M468.2 44.9L453.4 53.4M468.2 44.9L453.4 36.3M468.2 44.9L468.2 27.8M468.2 44.9L483.0 36.3M497.8 44.9L512.6 70.5M497.8 44.9L483.0 70.5M497.8 44.9L512.6 53.4M497.8 44.9L497.8 62.0M497.8 44.9L483.0 53.4M497.8 44.9L483.0 36.3M497.8 44.9L497.8 27.8M497.8 44.9L512.6 36.3M527.4 44.9L542.2 70.5M527.4 44.9L512.6 70.5M527.4 44.9L542.2 53.4M527.4 44.9L527.4 62.0M527.4 44.9L512.6 53.4M527.4 44.9L512.6 36.3M527.4 44.9L527.4 27.8M527.4 44.9L542.2 36.3M557.1 44.9L571.9 70.5M557.1 44.9L542.3 70.5M557.1 44.9L571.9 53.4M557.1 44.9L557.1 62.0M557.1 44.9L542.3 53.4M557.1 44.9L542.3 36.3M557.1 44.9L557.1 27.8M557.1 44.9L571.9 36.3M275.7 70.5L290.5 96.2M275.7 70.5L260.9 96.2M275.7 70.5L290.5 79.1M275.7 70.5L275.7 87.6M275.7 70.5L260.9 79.1M275.7 70.5L260.9 62.0M275.7 70.5L275.7 53.4M275.7 70.5L290.5 62.0M305.3 70.5L320.1 96.2M305.3 70.5L290.5 96.2M305.3 70.5L320.1 79.1M305.3 70.5L305.3 87.6M305.3 70.5L290.5 79.1M305.3 70.5L290.5 62.0M305.3 70.5L305.3 53.4M305.3 70.5L320.1 62.0M334.9 70.5L349.7 96.2M334.9 70.5L320.1 96.2M334.9 70.5L349.7 79.1M334.9 70.5L334.9 87.6M334.9 70.5L320.1 79.1M334.9 70.5L320.1 62.0M334.9 70.5L334.9 53.4M334.9 70.5L349.7 62.0M364.5 70.5L379.3 96.2M364.5 70.5L349.7 96.2M364.5 70.5L379.3 79.1M364.5 70.5L364.5 87.6M364.5 70.5L349.7 79.1M364.5 70.5L349.7 62.0M364.5 70.5L364.5 53.4M364.5 70.5L379.3 62.0M394.2 70.5L409.0 96.2M394.2 70.5L379.3 96.2M394.2 70.5L409.0 79.1M394.2 70.5L394.2 87.6M394.2 70.5L379.3 79.1M394.2 70.5L379.3 62.0M394.2 70.5L394.2 53.4M394.2 70.5L409.0 62.0M423.8 70.5L438.6 96.2M423.8 70.5L409.0 96.2M423.8 70.5L438.6 79.1M423.8 70.5L423.8 87.6M423.8 70.5L409.0 79.1M423.8 70.5L409.0 62.0M423.8 70.5L423.8 53.4M423.8 70.5L438.6 62.0M453.4 70.5L468.2 96.2M453.4 70.5L438.6 96.2M453.4 70.5L468.2 79.1M453.4 70.5L453.4 87.6M453.4 70.5L438.6 79.1M453.4 70.5L438.6 62.0M453.4 70.5L453.4 53.4M453.4 70.5L468.2 62.0M483.0 70.5L497.8 96.2M483.0 70.5L468.2 96.2M483.0 70.5L497.8 79.1M483.0 70.5L483.0 87.6M483.0 70.5L468.2 79.1M483.0 70.5L468.2 62.0M483.0 70.5L483.0 53.4M483.0 70.5L497.8 62.0M512.6 70.5L527.4 96.2M512.6 70.5L497.8 96.2M512.6 70.5L527.4 79.1M512.6 70.5L512.6 87.6M512.6 70.5L497.8 79.1M512.6 70.5L497.8 62.0M512.6 70.5L512.6 53.4M512.6 70.5L527.4 62.0M542.2 70.5L557.1 96.2M542.2 70.5L527.4 96.2M542.2 70.5L557.1 79.1M542.2 70.5L542.2 87.6M542.2 70.5L527.4 79.1M542.2 70.5L527.4 62.0M542.2 70.5L542.2 53.4M542.2 70.5L557.1 62.0M571.9 70.5L586.7 96.2M571.9 70.5L557.1 96.2M571.9 70.5L586.7 79.1M571.9 70.5L571.9 87.6M571.9 70.5L557.1 79.1M571.9 70.5L557.1 62.0M571.9 70.5L571.9 53.4M571.9 70.5L586.7 62.0M260.9 96.2L275.7 121.9M260.9 96.2L246.1 121.9M260.9 96.2L275.7 104.8M260.9 96.2L260.9 113.3M260.9 96.2L246.1 104.8M260.9 96.2L246.1 87.6M260.9 96.2L260.9 79.1M260.9 96.2L275.7 87.6M290.5 96.2L305.3 121.9M290.5 96.2L275.7 121.9M290.5 96.2L305.3 104.8M290.5 96.2L290.5 113.3M290.5 96.2L275.7 104.8M290.5 96.2L275.7 87.6M290.5 96.2L290.5 79.1M290.5 96.2L305.3 87.6M320.1 96.2L334.9 121.9M320.1 96.2L305.3 121.9M320.1 96.2L334.9 104.8M320.1 96.2L320.1 113.3M320.1 96.2L305.3 104.8M320.1 96.2L305.3 87.6M320.1 96.2L320.1 79.1M320.1 96.2L334.9 87.6M349.7 96.2L364.5 121.9M349.7 96.2L334.9 121.9M349.7 96.2L364.5 104.8M349.7 96.2L349.7 113.3M349.7 96.2L334.9 104.8M349.7 96.2L334.9 87.6M349.7 96.2L349.7 79.1M349.7 96.2L364.5 87.6M379.3 96.2L394.2 121.9M379.3 96.2L364.5 121.9M379.3 96.2L394.2 104.8M379.3 96.2L379.3 113.3M379.3 96.2L364.5 104.8M379.3 96.2L364.5 87.6M379.3 96.2L379.3 79.1M379.3 96.2L394.2 87.6M409.0 96.2L423.8 121.9M409.0 96.2L394.2 121.9M409.0 96.2L423.8 104.8M409.0 96.2L409.0 113.3M409.0 96.2L394.2 104.8M409.0 96.2L394.2 87.6M409.0 96.2L409.0 79.1M409.0 96.2L423.8 87.6M438.6 96.2L453.4 121.9M438.6 96.2L423.8 121.9M438.6 96.2L453.4 104.8M438.6 96.2L438.6 113.3M438.6 96.2L423.8 104.8M438.6 96.2L423.8 87.6M438.6 96.2L438.6 79.1M438.6 96.2L453.4 87.6M468.2 96.2L483.0 121.9M468.2 96.2L453.4 121.9M468.2 96.2L483.0 104.8M468.2 96.2L468.2 113.3M468.2 96.2L453.4 104.8M468.2 96.2L453.4 87.6M468.2 96.2L468.2 79.1M468.2 96.2L483.0 87.6M497.8 96.2L512.6 121.9M497.8 96.2L483.0 121.9M497.8 96.2L512.6 104.8M497.8 96.2L497.8 113.3M497.8 96.2L483.0 104.8M497.8 96.2L483.0 87.6M497.8 96.2L497.8 79.1M497.8 96.2L512.6 87.6M527.4 96.2L542.2 121.9M527.4 96.2L512.6 121.9M527.4 96.2L542.2 104.8M527.4 96.2L527.4 113.3M527.4 96.2L512.6 104.8M527.4 96.2L512.6 87.6M527.4 96.2L527.4 79.1M527.4 96.2L542.2 87.6M557.1 96.2L571.9 121.9M557.1 96.2L542.3 121.9M557.1 96.2L571.9 104.8M557.1 96.2L557.1 113.3M557.1 96.2L542.3 104.8M557.1 96.2L542.3 87.6M557.1 96.2L557.1 79.1M557.1 96.2L571.9 87.6M275.7 121.9L290.5 147.5M275.7 121.9L260.9 147.5M275.7 121.9L290.5 130.4M275.7 121.9L275.7 139.0M275.7 121.9L260.9 130.4M275.7 121.9L260.9 113.3M275.7 121.9L275.7 104.8M275.7 121.9L290.5 113.3M305.3 121.9L320.1 147.5M305.3 121.9L290.5 147.5M305.3 121.9L320.1 130.4M305.3 121.9L305.3 139.0M305.3 121.9L290.5 130.4M305.3 121.9L290.5 113.3M305.3 121.9L305.3 104.8M305.3 121.9L320.1 113.3M334.9 121.9L349.7 147.5M334.9 121.9L320.1 147.5M334.9 121.9L349.7 130.4M334.9 121.9L334.9 139.0M334.9 121.9L320.1 130.4M334.9 121.9L320.1 113.3M334.9 121.9L334.9 104.8M334.9 121.9L349.7 113.3M364.5 121.9L379.3 147.5M364.5 121.9L349.7 147.5M364.5 121.9L379.3 130.4M364.5 121.9L364.5 139.0M364.5 121.9L349.7 130.4M364.5 121.9L349.7 113.3M364.5 121.9L364.5 104.8M364.5 121.9L379.3 113.3M394.2 121.9L409.0 147.5M394.2 121.9L379.3 147.5M394.2 121.9L409.0 130.4M394.2 121.9L394.2 139.0M394.2 121.9L379.3 130.4M394.2 121.9L379.3 113.3M394.2 121.9L394.2 104.8M394.2 121.9L409.0 113.3M423.8 121.9L438.6 147.5M423.8 121.9L409.0 147.5M423.8 121.9L438.6 130.4M423.8 121.9L423.8 139.0M423.8 121.9L409.0 130.4M423.8 121.9L409.0 113.3M423.8 121.9L423.8 104.8M423.8 121.9L438.6 113.3M453.4 121.9L468.2 147.5M453.4 121.9L438.6 147.5M453.4 121.9L468.2 130.4M453.4 121.9L453.4 139.0M453.4 121.9L438.6 130.4M453.4 121.9L438.6 113.3M453.4 121.9L453.4 104.8M453.4 121.9L468.2 113.3M483.0 121.9L497.8 147.5M483.0 121.9L468.2 147.5M483.0 121.9L497.8 130.4M483.0 121.9L483.0 139.0M483.0 121.9L468.2 130.4M483.0 121.9L468.2 113.3M483.0 121.9L483.0 104.8M483.0 121.9L497.8 113.3M512.6 121.9L527.4 147.5M512.6 121.9L497.8 147.5M512.6 121.9L527.4 130.4M512.6 121.9L512.6 139.0M512.6 121.9L497.8 130.4M512.6 121.9L497.8 113.3M512.6 121.9L512.6 104.8M512.6 121.9L527.4 113.3M542.2 121.9L557.1 147.5M542.2 121.9L527.4 147.5M542.2 121.9L557.1 130.4M542.2 121.9L542.2 139.0M542.2 121.9L527.4 130.4M542.2 121.9L527.4 113.3M542.2 121.9L542.2 104.8M542.2 121.9L557.1 113.3M571.9 121.9L586.7 147.5M571.9 121.9L557.1 147.5M571.9 121.9L586.7 130.4M571.9 121.9L571.9 139.0M571.9 121.9L557.1 130.4M571.9 121.9L557.1 113.3M571.9 121.9L571.9 104.8M571.9 121.9L586.7 113.3M260.9 147.5L275.7 173.2M260.9 147.5L246.1 173.2M260.9 147.5L275.7 156.1M260.9 147.5L260.9 164.6M260.9 147.5L246.1 156.1M260.9 147.5L246.1 139.0M260.9 147.5L260.9 130.4M260.9 147.5L275.7 139.0M290.5 147.5L305.3 173.2M290.5 147.5L275.7 173.2M290.5 147.5L305.3 156.1M290.5 147.5L290.5 164.6M290.5 147.5L275.7 156.1M290.5 147.5L275.7 139.0M290.5 147.5L290.5 130.4M290.5 147.5L305.3 139.0M320.1 147.5L334.9 173.2M320.1 147.5L305.3 173.2M320.1 147.5L334.9 156.1M320.1 147.5L320.1 164.6M320.1 147.5L305.3 156.1M320.1 147.5L305.3 139.0M320.1 147.5L320.1 130.4M320.1 147.5L334.9 139.0M349.7 147.5L364.5 173.2M349.7 147.5L334.9 173.2M349.7 147.5L364.5 156.1M349.7 147.5L349.7 164.6M349.7 147.5L334.9 156.1M349.7 147.5L334.9 139.0M349.7 147.5L349.7 130.4M349.7 147.5L364.5 139.0M379.3 147.5L394.2 173.2M379.3 147.5L364.5 173.2M379.3 147.5L394.2 156.1M379.3 147.5L379.3 164.6M379.3 147.5L364.5 156.1M379.3 147.5L364.5 139.0M379.3 147.5L379.3 130.4M379.3 147.5L394.2 139.0M409.0 147.5L423.8 173.2M409.0 147.5L394.2 173.2M409.0 147.5L423.8 156.1M409.0 147.5L409.0 164.6M409.0 147.5L394.2 156.1M409.0 147.5L394.2 139.0M409.0 147.5L409.0 130.4M409.0 147.5L423.8 139.0M438.6 147.5L453.4 173.2M438.6 147.5L423.8 173.2M438.6 147.5L453.4 156.1M438.6 147.5L438.6 164.6M438.6 147.5L423.8 156.1M438.6 147.5L423.8 139.0M438.6 147.5L438.6 130.4M438.6 147.5L453.4 139.0M468.2 147.5L483.0 173.2M468.2 147.5L453.4 173.2M468.2 147.5L483.0 156.1M468.2 147.5L468.2 164.6M468.2 147.5L453.4 156.1M468.2 147.5L453.4 139.0M468.2 147.5L468.2 130.4M468.2 147.5L483.0 139.0M497.8 147.5L512.6 173.2M497.8 147.5L483.0 173.2M497.8 147.5L512.6 156.1M497.8 147.5L497.8 164.6M497.8 147.5L483.0 156.1M497.8 147.5L483.0 139.0M497.8 147.5L497.8 130.4M497.8 147.5L512.6 139.0M527.4 147.5L542.2 173.2M527.4 147.5L512.6 173.2M527.4 147.5L542.2 156.1M527.4 147.5L527.4 164.6M527.4 147.5L512.6 156.1M527.4 147.5L512.6 139.0M527.4 147.5L527.4 130.4M527.4 147.5L542.2 139.0M557.1 147.5L571.9 173.2M557.1 147.5L542.3 173.2M557.1 147.5L571.9 156.1M557.1 147.5L557.1 164.6M557.1 147.5L542.3 156.1M557.1 147.5L542.3 139.0M557.1 147.5L557.1 130.4M557.1 147.5L571.9 139.0M275.7 173.2L290.5 198.8M275.7 173.2L260.9 198.8M275.7 173.2L290.5 181.7M275.7 173.2L275.7 190.3M275.7 173.2L260.9 181.7M275.7 173.2L260.9 164.6M275.7 173.2L275.7 156.1M275.7 173.2L290.5 164.6M305.3 173.2L320.1 198.8M305.3 173.2L290.5 198.8M305.3 173.2L320.1 181.7M305.3 173.2L305.3 190.3M305.3 173.2L290.5 181.7M305.3 173.2L290.5 164.6M305.3 173.2L305.3 156.1M305.3 173.2L320.1 164.6M334.9 173.2L349.7 198.8M334.9 173.2L320.1 198.8M334.9 173.2L349.7 181.7M334.9 173.2L334.9 190.3M334.9 173.2L320.1 181.7M334.9 173.2L320.1 164.6M334.9 173.2L334.9 156.1M334.9 173.2L349.7 164.6M364.5 173.2L379.3 198.8M364.5 173.2L349.7 198.8M364.5 173.2L379.3 181.7M364.5 173.2L364.5 190.3M364.5 173.2L349.7 181.7M364.5 173.2L349.7 164.6M364.5 173.2L364.5 156.1M364.5 173.2L379.3 164.6M394.2 173.2L409.0 198.8M394.2 173.2L379.3 198.8M394.2 173.2L409.0 181.7M394.2 173.2L394.2 190.3M394.2 173.2L379.3 181.7M394.2 173.2L379.3 164.6M394.2 173.2L394.2 156.1M394.2 173.2L409.0 164.6M423.8 173.2L438.6 198.8M423.8 173.2L409.0 198.8M423.8 173.2L438.6 181.7M423.8 173.2L423.8 190.3M423.8 173.2L409.0 181.7M423.8 173.2L409.0 164.6M423.8 173.2L423.8 156.1M423.8 173.2L438.6 164.6M453.4 173.2L468.2 198.8M453.4 173.2L438.6 198.8M453.4 173.2L468.2 181.7M453.4 173.2L453.4 190.3M453.4 173.2L438.6 181.7M453.4 173.2L438.6 164.6M453.4 173.2L453.4 156.1M453.4 173.2L468.2 164.6M483.0 173.2L497.8 198.8M483.0 173.2L468.2 198.8M483.0 173.2L497.8 181.7M483.0 173.2L483.0 190.3M483.0 173.2L468.2 181.7M483.0 173.2L468.2 164.6M483.0 173.2L483.0 156.1M483.0 173.2L497.8 164.6M512.6 173.2L527.4 198.8M512.6 173.2L497.8 198.8M512.6 173.2L527.4 181.7M512.6 173.2L512.6 190.3M512.6 173.2L497.8 181.7M512.6 173.2L497.8 164.6M512.6 173.2L512.6 156.1M512.6 173.2L527.4 164.6M542.2 173.2L557.1 198.8M542.2 173.2L527.4 198.8M542.2 173.2L557.1 181.7M542.2 173.2L542.2 190.3M542.2 173.2L527.4 181.7M542.2 173.2L527.4 164.6M542.2 173.2L542.2 156.1M542.2 173.2L557.1 164.6M571.9 173.2L586.7 198.8M571.9 173.2L557.1 198.8M571.9 173.2L586.7 181.7M571.9 173.2L571.9 190.3M571.9 173.2L557.1 181.7M571.9 173.2L557.1 164.6M571.9 173.2L571.9 156.1M571.9 173.2L586.7 164.6M260.9 198.8L275.7 224.5M260.9 198.8L246.1 224.5M260.9 198.8L275.7 207.4M260.9 198.8L260.9 215.9M260.9 198.8L246.1 207.4M260.9 198.8L246.1 190.3M260.9 198.8L260.9 181.7M260.9 198.8L275.7 190.3M290.5 198.8L305.3 224.5M290.5 198.8L275.7 224.5M290.5 198.8L305.3 207.4M290.5 198.8L290.5 215.9M290.5 198.8L275.7 207.4M290.5 198.8L275.7 190.3M290.5 198.8L290.5 181.7M290.5 198.8L305.3 190.3M320.1 198.8L334.9 224.5M320.1 198.8L305.3 224.5M320.1 198.8L334.9 207.4M320.1 198.8L320.1 215.9M320.1 198.8L305.3 207.4M320.1 198.8L305.3 190.3M320.1 198.8L320.1 181.7M320.1 198.8L334.9 190.3M349.7 198.8L364.5 224.5M349.7 198.8L334.9 224.5M349.7 198.8L364.5 207.4M349.7 198.8L349.7 215.9M349.7 198.8L334.9 207.4M349.7 198.8L334.9 190.3M349.7 198.8L349.7 181.7M349.7 198.8L364.5 190.3M379.3 198.8L394.2 224.5M379.3 198.8L364.5 224.5M379.3 198.8L394.2 207.4M379.3 198.8L379.3 215.9M379.3 198.8L364.5 207.4M379.3 198.8L364.5 190.3M379.3 198.8L379.3 181.7M379.3 198.8L394.2 190.3M409.0 198.8L423.8 224.5M409.0 198.8L394.2 224.5M409.0 198.8L423.8 207.4M409.0 198.8L409.0 215.9M409.0 198.8L394.2 207.4M409.0 198.8L394.2 190.3M409.0 198.8L409.0 181.7M409.0 198.8L423.8 190.3M438.6 198.8L453.4 224.5M438.6 198.8L423.8 224.5M438.6 198.8L453.4 207.4M438.6 198.8L438.6 215.9M438.6 198.8L423.8 207.4M438.6 198.8L423.8 190.3M438.6 198.8L438.6 181.7M438.6 198.8L453.4 190.3M468.2 198.8L483.0 224.5M468.2 198.8L453.4 224.5M468.2 198.8L483.0 207.4M468.2 198.8L468.2 215.9M468.2 198.8L453.4 207.4M468.2 198.8L453.4 190.3M468.2 198.8L468.2 181.7M468.2 198.8L483.0 190.3M497.8 198.8L512.6 224.5M497.8 198.8L483.0 224.5M497.8 198.8L512.6 207.4M497.8 198.8L497.8 215.9M497.8 198.8L483.0 207.4M497.8 198.8L483.0 190.3M497.8 198.8L497.8 181.7M497.8 198.8L512.6 190.3M527.4 198.8L542.2 224.5M527.4 198.8L512.6 224.5M527.4 198.8L542.2 207.4M527.4 198.8L527.4 215.9M527.4 198.8L512.6 207.4M527.4 198.8L512.6 190.3M527.4 198.8L527.4 181.7M527.4 198.8L542.2 190.3M557.1 198.8L571.9 224.5M557.1 198.8L542.3 224.5M557.1 198.8L571.9 207.4M557.1 198.8L557.1 215.9M557.1 198.8L542.3 207.4M557.1 198.8L542.3 190.3M557.1 198.8L557.1 181.7M557.1 198.8L571.9 190.3M275.7 224.5L290.5 250.1M275.7 224.5L260.9 250.1M275.7 224.5L290.5 233.0M275.7 224.5L275.7 241.6M275.7 224.5L260.9 233.0M275.7 224.5L260.9 215.9M275.7 224.5L275.7 207.4M275.7 224.5L290.5 215.9M305.3 224.5L320.1 250.1M305.3 224.5L290.5 250.1M305.3 224.5L320.1 233.0M305.3 224.5L305.3 241.6M305.3 224.5L290.5 233.0M305.3 224.5L290.5 215.9M305.3 224.5L305.3 207.4M305.3 224.5L320.1 215.9M334.9 224.5L349.7 250.1M334.9 224.5L320.1 250.1M334.9 224.5L349.7 233.0M334.9 224.5L334.9 241.6M334.9 224.5L320.1 233.0M334.9 224.5L320.1 215.9M334.9 224.5L334.9 207.4M334.9 224.5L349.7 215.9M364.5 224.5L379.3 250.1M364.5 224.5L349.7 250.1M364.5 224.5L379.3 233.0M364.5 224.5L364.5 241.6M364.5 224.5L349.7 233.0M364.5 224.5L349.7 215.9M364.5 224.5L364.5 207.4M364.5 224.5L379.3 215.9M394.2 224.5L409.0 250.1M394.2 224.5L379.3 250.1M394.2 224.5L409.0 233.0M394.2 224.5L394.2 241.6M394.2 224.5L379.3 233.0M394.2 224.5L379.3 215.9M394.2 224.5L394.2 207.4M394.2 224.5L409.0 215.9M423.8 224.5L438.6 250.1M423.8 224.5L409.0 250.1M423.8 224.5L438.6 233.0M423.8 224.5L423.8 241.6M423.8 224.5L409.0 233.0M423.8 224.5L409.0 215.9M423.8 224.5L423.8 207.4M423.8 224.5L438.6 215.9M453.4 224.5L468.2 250.1M453.4 224.5L438.6 250.1M453.4 224.5L468.2 233.0M453.4 224.5L453.4 241.6M453.4 224.5L438.6 233.0M453.4 224.5L438.6 215.9M453.4 224.5L453.4 207.4M453.4 224.5L468.2 215.9M483.0 224.5L497.8 250.1M483.0 224.5L468.2 250.1M483.0 224.5L497.8 233.0M483.0 224.5L483.0 241.6M483.0 224.5L468.2 233.0M483.0 224.5L468.2 215.9M483.0 224.5L483.0 207.4M483.0 224.5L497.8 215.9M512.6 224.5L527.4 250.1M512.6 224.5L497.8 250.1M512.6 224.5L527.4 233.0M512.6 224.5L512.6 241.6M512.6 224.5L497.8 233.0M512.6 224.5L497.8 215.9M512.6 224.5L512.6 207.4M512.6 224.5L527.4 215.9M542.2 224.5L557.1 250.1M542.2 224.5L527.4 250.1M542.2 224.5L557.1 233.0M542.2 224.5L542.2 241.6M542.2 224.5L527.4 233.0M542.2 224.5L527.4 215.9M542.2 224.5L542.2 207.4M542.2 224.5L557.1 215.9M571.9 224.5L586.7 250.1M571.9 224.5L557.1 250.1M571.9 224.5L586.7 233.0M571.9 224.5L571.9 241.6M571.9 224.5L557.1 233.0M571.9 224.5L557.1 215.9M571.9 224.5L571.9 207.4M571.9 224.5L586.7 215.9M260.9 250.1L275.7 275.8M260.9 250.1L246.1 275.8M260.9 250.1L275.7 258.7M260.9 250.1L260.9 267.2M260.9 250.1L246.1 258.7M260.9 250.1L246.1 241.6M260.9 250.1L260.9 233.0M260.9 250.1L275.7 241.6M290.5 250.1L305.3 275.8M290.5 250.1L275.7 275.8M290.5 250.1L305.3 258.7M290.5 250.1L290.5 267.2M290.5 250.1L275.7 258.7M290.5 250.1L275.7 241.6M290.5 250.1L290.5 233.0M290.5 250.1L305.3 241.6M320.1 250.1L334.9 275.8M320.1 250.1L305.3 275.8M320.1 250.1L334.9 258.7M320.1 250.1L320.1 267.2M320.1 250.1L305.3 258.7M320.1 250.1L305.3 241.6M320.1 250.1L320.1 233.0M320.1 250.1L334.9 241.6M349.7 250.1L364.5 275.8M349.7 250.1L334.9 275.8M349.7 250.1L364.5 258.7M349.7 250.1L349.7 267.2M349.7 250.1L334.9 258.7M349.7 250.1L334.9 241.6M349.7 250.1L349.7 233.0M349.7 250.1L364.5 241.6M379.3 250.1L394.2 275.8M379.3 250.1L364.5 275.8M379.3 250.1L394.2 258.7M379.3 250.1L379.3 267.2M379.3 250.1L364.5 258.7M379.3 250.1L364.5 241.6M379.3 250.1L379.3 233.0M379.3 250.1L394.2 241.6M409.0 250.1L423.8 275.8M409.0 250.1L394.2 275.8M409.0 250.1L423.8 258.7M409.0 250.1L409.0 267.2M409.0 250.1L394.2 258.7M409.0 250.1L394.2 241.6M409.0 250.1L409.0 233.0M409.0 250.1L423.8 241.6M438.6 250.1L453.4 275.8M438.6 250.1L423.8 275.8M438.6 250.1L453.4 258.7M438.6 250.1L438.6 267.2M438.6 250.1L423.8 258.7M438.6 250.1L423.8 241.6M438.6 250.1L438.6 233.0M438.6 250.1L453.4 241.6M468.2 250.1L483.0 275.8M468.2 250.1L453.4 275.8M468.2 250.1L483.0 258.7M468.2 250.1L468.2 267.2M468.2 250.1L453.4 258.7M468.2 250.1L453.4 241.6M468.2 250.1L468.2 233.0M468.2 250.1L483.0 241.6M497.8 250.1L512.6 275.8M497.8 250.1L483.0 275.8M497.8 250.1L512.6 258.7M497.8 250.1L497.8 267.2M497.8 250.1L483.0 258.7M497.8 250.1L483.0 241.6M497.8 250.1L497.8 233.0M497.8 250.1L512.6 241.6M527.4 250.1L542.2 275.8M527.4 250.1L512.6 275.8M527.4 250.1L542.2 258.7M527.4 250.1L527.4 267.2M527.4 250.1L512.6 258.7M527.4 250.1L512.6 241.6M527.4 250.1L527.4 233.0M527.4 250.1L542.2 241.6M557.1 250.1L571.9 275.8M557.1 250.1L542.3 275.8M557.1 250.1L571.9 258.7M557.1 250.1L557.1 267.2M557.1 250.1L542.3 258.7M557.1 250.1L542.3 241.6M557.1 250.1L557.1 233.0M557.1 250.1L571.9 241.6M275.7 275.8L290.5 301.4M275.7 275.8L260.9 301.4M275.7 275.8L290.5 284.3M275.7 275.8L275.7 292.9M275.7 275.8L260.9 284.3M275.7 275.8L260.9 267.2M275.7 275.8L275.7 258.7M275.7 275.8L290.5 267.2M305.3 275.8L320.1 301.4M305.3 275.8L290.5 301.4M305.3 275.8L320.1 284.3M305.3 275.8L305.3 292.9M305.3 275.8L290.5 284.3M305.3 275.8L290.5 267.2M305.3 275.8L305.3 258.7M305.3 275.8L320.1 267.2M334.9 275.8L349.7 301.4M334.9 275.8L320.1 301.4M334.9 275.8L349.7 284.3M334.9 275.8L334.9 292.9M334.9 275.8L320.1 284.3M334.9 275.8L320.1 267.2M334.9 275.8L334.9 258.7M334.9 275.8L349.7 267.2M364.5 275.8L379.3 301.4M364.5 275.8L349.7 301.4M364.5 275.8L379.3 284.3M364.5 275.8L364.5 292.9M364.5 275.8L349.7 284.3M364.5 275.8L349.7 267.2M364.5 275.8L364.5 258.7M364.5 275.8L379.3 267.2M394.2 275.8L409.0 301.4M394.2 275.8L379.3 301.4M394.2 275.8L409.0 284.3M394.2 275.8L394.2 292.9M394.2 275.8L379.3 284.3M394.2 275.8L379.3 267.2M394.2 275.8L394.2 258.7M394.2 275.8L409.0 267.2M423.8 275.8L438.6 301.4M423.8 275.8L409.0 301.4M423.8 275.8L438.6 284.3M423.8 275.8L423.8 292.9M423.8 275.8L409.0 284.3M423.8 275.8L409.0 267.2M423.8 275.8L423.8 258.7M423.8 275.8L438.6 267.2M453.4 275.8L468.2 301.4M453.4 275.8L438.6 301.4M453.4 275.8L468.2 284.3M453.4 275.8L453.4 292.9M453.4 275.8L438.6 284.3M453.4 275.8L438.6 267.2M453.4 275.8L453.4 258.7M453.4 275.8L468.2 267.2M483.0 275.8L497.8 301.4M483.0 275.8L468.2 301.4M483.0 275.8L497.8 284.3M483.0 275.8L483.0 292.9M483.0 275.8L468.2 284.3M483.0 275.8L468.2 267.2M483.0 275.8L483.0 258.7M483.0 275.8L497.8 267.2M512.6 275.8L527.4 301.4M512.6 275.8L497.8 301.4M512.6 275.8L527.4 284.3M512.6 275.8L512.6 292.9M512.6 275.8L497.8 284.3M512.6 275.8L497.8 267.2M512.6 275.8L512.6 258.7M512.6 275.8L527.4 267.2M542.2 275.8L557.1 301.4M542.2 275.8L527.4 301.4M542.2 275.8L557.1 284.3M542.2 275.8L542.2 292.9M542.2 275.8L527.4 284.3M542.2 275.8L527.4 267.2M542.2 275.8L542.2 258.7M542.2 275.8L557.1 267.2M571.9 275.8L586.7 301.4M571.9 275.8L557.1 301.4M571.9 275.8L586.7 284.3M571.9 275.8L571.9 292.9M571.9 275.8L557.1 284.3M571.9 275.8L557.1 267.2M571.9 275.8L571.9 258.7M571.9 275.8L586.7 267.2M260.9 301.4L275.7 327.1M260.9 301.4L246.1 327.1M260.9 301.4L275.7 310.0M260.9 301.4L260.9 318.5M260.9 301.4L246.1 310.0M260.9 301.4L246.1 292.9M260.9 301.4L260.9 284.3M260.9 301.4L275.7 292.9M290.5 301.4L305.3 327.1M290.5 301.4L275.7 327.1M290.5 301.4L305.3 310.0M290.5 301.4L290.5 318.5M290.5 301.4L275.7 310.0M290.5 301.4L275.7 292.9M290.5 301.4L290.5 284.3M290.5 301.4L305.3 292.9M320.1 301.4L334.9 327.1M320.1 301.4L305.3 327.1M320.1 301.4L334.9 310.0M320.1 301.4L320.1 318.5M320.1 301.4L305.3 310.0M320.1 301.4L305.3 292.9M320.1 301.4L320.1 284.3M320.1 301.4L334.9 292.9M349.7 301.4L364.5 327.1M349.7 301.4L334.9 327.1M349.7 301.4L364.5 310.0M349.7 301.4L349.7 318.5M349.7 301.4L334.9 310.0M349.7 301.4L334.9 292.9M349.7 301.4L349.7 284.3M349.7 301.4L364.5 292.9M379.3 301.4L394.2 327.1M379.3 301.4L364.5 327.1M379.3 301.4L394.2 310.0M379.3 301.4L379.3 318.5M379.3 301.4L364.5 310.0M379.3 301.4L364.5 292.9M379.3 301.4L379.3 284.3M379.3 301.4L394.2 292.9M409.0 301.4L423.8 327.1M409.0 301.4L394.2 327.1M409.0 301.4L423.8 310.0M409.0 301.4L409.0 318.5M409.0 301.4L394.2 310.0M409.0 301.4L394.2 292.9M409.0 301.4L409.0 284.3M409.0 301.4L423.8 292.9M438.6 301.4L453.4 327.1M438.6 301.4L423.8 327.1M438.6 301.4L453.4 310.0M438.6 301.4L438.6 318.5M438.6 301.4L423.8 310.0M438.6 301.4L423.8 292.9M438.6 301.4L438.6 284.3M438.6 301.4L453.4 292.9M468.2 301.4L483.0 327.1M468.2 301.4L453.4 327.1M468.2 301.4L483.0 310.0M468.2 301.4L468.2 318.5M468.2 301.4L453.4 310.0M468.2 301.4L453.4 292.9M468.2 301.4L468.2 284.3M468.2 301.4L483.0 292.9M497.8 301.4L512.6 327.1M497.8 301.4L483.0 327.1M497.8 301.4L512.6 310.0M497.8 301.4L497.8 318.5M497.8 301.4L483.0 310.0M497.8 301.4L483.0 292.9M497.8 301.4L497.8 284.3M497.8 301.4L512.6 292.9M527.4 301.4L542.2 327.1M527.4 301.4L512.6 327.1M527.4 301.4L542.2 310.0M527.4 301.4L527.4 318.5M527.4 301.4L512.6 310.0M527.4 301.4L512.6 292.9M527.4 301.4L527.4 284.3M527.4 301.4L542.2 292.9M557.1 301.4L571.9 327.1M557.1 301.4L542.3 327.1M557.1 301.4L571.9 310.0M557.1 301.4L557.1 318.5M557.1 301.4L542.3 310.0M557.1 301.4L542.3 292.9M557.1 301.4L557.1 284.3M557.1 301.4L571.9 292.9" stroke="#66aecf" stroke-width="0.72" fill="none"/><g fill="#4a9fc8" fill-opacity="0.450"><circle cx="320.1" cy="96.2" r="1.500"/><circle cx="349.7" cy="96.2" r="1.500"/><circle cx="379.3" cy="96.2" r="1.500"/><circle cx="409.0" cy="96.2" r="1.500"/><circle cx="438.6" cy="96.2" r="1.500"/><circle cx="468.2" cy="96.2" r="1.500"/><circle cx="497.8" cy="96.2" r="1.500"/><circle cx="334.9" cy="121.9" r="1.500"/><circle cx="364.5" cy="121.9" r="1.500"/><circle cx="394.2" cy="121.9" r="1.500"/><circle cx="423.8" cy="121.9" r="1.500"/><circle cx="453.4" cy="121.9" r="1.500"/><circle cx="483.0" cy="121.9" r="1.500"/><circle cx="320.1" cy="147.5" r="1.500"/><circle cx="349.7" cy="147.5" r="1.500"/><circle cx="379.3" cy="147.5" r="1.500"/><circle cx="409.0" cy="147.5" r="1.500"/><circle cx="438.6" cy="147.5" r="1.500"/><circle cx="468.2" cy="147.5" r="1.500"/><circle cx="497.8" cy="147.5" r="1.500"/><circle cx="334.9" cy="173.2" r="1.500"/><circle cx="364.5" cy="173.2" r="1.500"/><circle cx="394.2" cy="173.2" r="1.500"/><circle cx="423.8" cy="173.2" r="1.500"/><circle cx="453.4" cy="173.2" r="1.500"/><circle cx="483.0" cy="173.2" r="1.500"/><circle cx="320.1" cy="198.8" r="1.500"/><circle cx="349.7" cy="198.8" r="1.500"/><circle cx="379.3" cy="198.8" r="1.500"/><circle cx="409.0" cy="198.8" r="1.500"/><circle cx="438.6" cy="198.8" r="1.500"/><circle cx="468.2" cy="198.8" r="1.500"/><circle cx="497.8" cy="198.8" r="1.500"/><circle cx="334.9" cy="224.5" r="1.500"/><circle cx="364.5" cy="224.5" r="1.500"/><circle cx="394.2" cy="224.5" r="1.500"/><circle cx="423.8" cy="224.5" r="1.500"/><circle cx="453.4" cy="224.5" r="1.500"/><circle cx="483.0" cy="224.5" r="1.500"/><circle cx="320.1" cy="250.1" r="1.500"/><circle cx="349.7" cy="250.1" r="1.500"/><circle cx="379.3" cy="250.1" r="1.500"/><circle cx="409.0" cy="250.1" r="1.500"/><circle cx="438.6" cy="250.1" r="1.500"/><circle cx="468.2" cy="250.1" r="1.500"/><circle cx="497.8" cy="250.1" r="1.500"/></g></svg><svg class="ic" style="left:0;top:0" width="670" height="405" viewBox="0 0 670 405"><g fill="#5c686d"><rect x="312.900" y="83.250" width="188.400" height="1.900"/><rect x="312.900" y="259.250" width="188.400" height="1.950"/><rect x="312.900" y="83.250" width="2.750" height="177.900"/><rect x="498.550" y="83.250" width="2.750" height="177.900"/></g><rect x="309.500" y="79.400" width="197.500" height="187.500" fill="none" stroke="#6f9fee" stroke-width="0.800"/><path d="M314.7 91.8V84.4H322.1" fill="none" stroke="#000" stroke-width="1.9"/><path d="M500.3 91.8V84.4H492.9" fill="none" stroke="#000" stroke-width="1.9"/><path d="M314.7 252.7V260.1H322.1" fill="none" stroke="#000" stroke-width="1.9"/><path d="M500.3 252.7V260.1H492.9" fill="none" stroke="#000" stroke-width="1.9"/><path d="M403.5 84.4H411.5" fill="none" stroke="#000" stroke-width="1.9"/><path d="M403.5 260.1H411.5" fill="none" stroke="#000" stroke-width="1.9"/><path d="M314.7 168.2V176.2" fill="none" stroke="#000" stroke-width="1.9"/><path d="M500.3 168.2V176.2" fill="none" stroke="#000" stroke-width="1.9"/><path d="M408.200 73.200V77.400" stroke="#8ab4f8" stroke-width="0.900"/><rect x="307.3" y="77.2" width="4.200" height="4.200" fill="#1a6ce8" stroke="#fff" stroke-width="0.500"/><rect x="307.3" y="171.0" width="4.200" height="4.200" fill="#1a6ce8" stroke="#fff" stroke-width="0.500"/><rect x="307.3" y="264.8" width="4.200" height="4.200" fill="#1a6ce8" stroke="#fff" stroke-width="0.500"/><rect x="406.1" y="77.2" width="4.200" height="4.200" fill="#1a6ce8" stroke="#fff" stroke-width="0.500"/><rect x="406.1" y="264.8" width="4.200" height="4.200" fill="#1a6ce8" stroke="#fff" stroke-width="0.500"/><rect x="504.9" y="77.2" width="4.200" height="4.200" fill="#1a6ce8" stroke="#fff" stroke-width="0.500"/><rect x="504.9" y="171.0" width="4.200" height="4.200" fill="#1a6ce8" stroke="#fff" stroke-width="0.500"/><rect x="504.9" y="264.8" width="4.200" height="4.200" fill="#1a6ce8" stroke="#fff" stroke-width="0.500"/></svg><div class="t" id="sn" style="left:361.400px;top:279.300px;font-size:17.600px;line-height:22px;font-weight:400;color:#0a0a0a;letter-spacing:-0.200px;-webkit-text-stroke:0.550px #0a0a0a">Shop Name</div><svg class="ic" style="left:330.800px;top:318.600px" width="44.100" height="44.100" viewBox="0 0 29 29"><path d="M0 0h7v1h-7zM8 0h5v1h-5zM14 0h2v1h-2zM19 0h1v1h-1zM22 0h7v1h-7zM0 1h1v1h-1zM6 1h1v1h-1zM8 1h2v1h-2zM11 1h2v1h-2zM15 1h1v1h-1zM20 1h1v1h-1zM22 1h1v1h-1zM28 1h1v1h-1zM0 2h1v1h-1zM2 2h3v1h-3zM6 2h1v1h-1zM10 2h1v1h-1zM12 2h1v1h-1zM17 2h2v1h-2zM20 2h1v1h-1zM22 2h1v1h-1zM24 2h3v1h-3zM28 2h1v1h-1zM0 3h1v1h-1zM2 3h3v1h-3zM6 3h1v1h-1zM8 3h2v1h-2zM12 3h5v1h-5zM18 3h3v1h-3zM22 3h1v1h-1zM24 3h3v1h-3zM28 3h1v1h-1zM0 4h1v1h-1zM2 4h3v1h-3zM6 4h1v1h-1zM8 4h11v1h-11zM22 4h1v1h-1zM24 4h3v1h-3zM28 4h1v1h-1zM0 5h1v1h-1zM6 5h1v1h-1zM10 5h1v1h-1zM12 5h1v1h-1zM17 5h3v1h-3zM22 5h1v1h-1zM28 5h1v1h-1zM0 6h7v1h-7zM8 6h1v1h-1zM10 6h1v1h-1zM12 6h1v1h-1zM14 6h1v1h-1zM16 6h1v1h-1zM18 6h1v1h-1zM20 6h1v1h-1zM22 6h7v1h-7zM8 7h2v1h-2zM12 7h3v1h-3zM17 7h1v1h-1zM0 8h1v1h-1zM3 8h4v1h-4zM8 8h3v1h-3zM12 8h2v1h-2zM16 8h1v1h-1zM21 8h4v1h-4zM26 8h2v1h-2zM1 9h1v1h-1zM5 9h1v1h-1zM7 9h2v1h-2zM14 9h1v1h-1zM19 9h1v1h-1zM21 9h1v1h-1zM26 9h1v1h-1zM1 10h6v1h-6zM10 10h1v1h-1zM13 10h1v1h-1zM16 10h1v1h-1zM18 10h2v1h-2zM22 10h2v1h-2zM25 10h3v1h-3zM0 11h1v1h-1zM2 11h3v1h-3zM7 11h1v1h-1zM11 11h3v1h-3zM15 11h3v1h-3zM20 11h2v1h-2zM25 11h2v1h-2zM28 11h1v1h-1zM0 12h1v1h-1zM4 12h1v1h-1zM6 12h1v1h-1zM8 12h2v1h-2zM12 12h2v1h-2zM15 12h7v1h-7zM23 12h1v1h-1zM25 12h4v1h-4zM0 13h1v1h-1zM3 13h2v1h-2zM8 13h2v1h-2zM11 13h1v1h-1zM15 13h1v1h-1zM19 13h5v1h-5zM25 13h3v1h-3zM2 14h7v1h-7zM12 14h1v1h-1zM14 14h5v1h-5zM20 14h1v1h-1zM22 14h7v1h-7zM0 15h1v1h-1zM7 15h2v1h-2zM10 15h1v1h-1zM13 15h1v1h-1zM19 15h1v1h-1zM0 16h5v1h-5zM6 16h1v1h-1zM10 16h2v1h-2zM17 16h1v1h-1zM19 16h3v1h-3zM23 16h1v1h-1zM26 16h3v1h-3zM4 17h2v1h-2zM8 17h1v1h-1zM10 17h3v1h-3zM16 17h1v1h-1zM18 17h3v1h-3zM22 17h1v1h-1zM25 17h2v1h-2zM0 18h3v1h-3zM4 18h1v1h-1zM6 18h1v1h-1zM9 18h1v1h-1zM14 18h1v1h-1zM16 18h9v1h-9zM26 18h1v1h-1zM0 19h1v1h-1zM4 19h2v1h-2zM9 19h5v1h-5zM15 19h1v1h-1zM17 19h2v1h-2zM20 19h2v1h-2zM1 20h1v1h-1zM3 20h1v1h-1zM6 20h2v1h-2zM9 20h4v1h-4zM15 20h1v1h-1zM17 20h1v1h-1zM19 20h7v1h-7zM28 20h1v1h-1zM10 21h2v1h-2zM13 21h4v1h-4zM18 21h1v1h-1zM20 21h1v1h-1zM24 21h3v1h-3zM0 22h7v1h-7zM8 22h1v1h-1zM13 22h3v1h-3zM20 22h1v1h-1zM22 22h1v1h-1zM24 22h1v1h-1zM26 22h1v1h-1zM0 23h1v1h-1zM6 23h1v1h-1zM9 23h2v1h-2zM12 23h3v1h-3zM18 23h3v1h-3zM24 23h2v1h-2zM27 23h2v1h-2zM0 24h1v1h-1zM2 24h3v1h-3zM6 24h1v1h-1zM11 24h1v1h-1zM13 24h1v1h-1zM15 24h2v1h-2zM18 24h1v1h-1zM20 24h5v1h-5zM26 24h3v1h-3zM0 25h1v1h-1zM2 25h3v1h-3zM6 25h1v1h-1zM10 25h2v1h-2zM14 25h1v1h-1zM16 25h7v1h-7zM24 25h1v1h-1zM26 25h2v1h-2zM0 26h1v1h-1zM2 26h3v1h-3zM6 26h1v1h-1zM9 26h2v1h-2zM13 26h3v1h-3zM17 26h1v1h-1zM20 26h2v1h-2zM24 26h1v1h-1zM26 26h3v1h-3zM0 27h1v1h-1zM6 27h1v1h-1zM9 27h4v1h-4zM14 27h1v1h-1zM20 27h3v1h-3zM24 27h2v1h-2zM27 27h2v1h-2zM0 28h7v1h-7zM8 28h2v1h-2zM11 28h3v1h-3zM19 28h1v1h-1zM21 28h1v1h-1zM23 28h1v1h-1zM25 28h4v1h-4z" fill="#111"/></svg><div class="t" id="by" style="left:383.800px;top:323.900px;font-size:6.400px;line-height:8.200px;color:#6a6a6a;white-space:pre;letter-spacing:0.090px">By accessing the QRcode,
you agree to the access analysis.</div><svg class="ic" style="left:382px;top:348px" width="10" height="11" viewBox="0 0 10 11"><path d="M1 1.900l2.300.700 1.500 6.200" fill="none" stroke="#1c3f8f" stroke-width="0.800"/></svg><div class="t" id="ws" style="left:385.300px;top:348.700px;font-size:5.850px;line-height:9px;color:#3f9fe6"><span style="color:#1c3f8f;font-size:10px;font-weight:400;display:inline-block;transform:scaleX(0.62);transform-origin:0 50%;margin-right:-3.300px;-webkit-text-stroke:0.350px #1c3f8f">W</span><span style="color:#2a6bc0">orld</span>Shopping</div><div class="t" id="ps" style="left:428.800px;top:350.600px;font-size:5.450px;line-height:8px;color:#4a4a4a">Purchasing Supporter</div><div class="a" style="left:388.500px;top:392.800px;width:27px;height:1.100px;background:#7d7d7d"></div></body></html>
